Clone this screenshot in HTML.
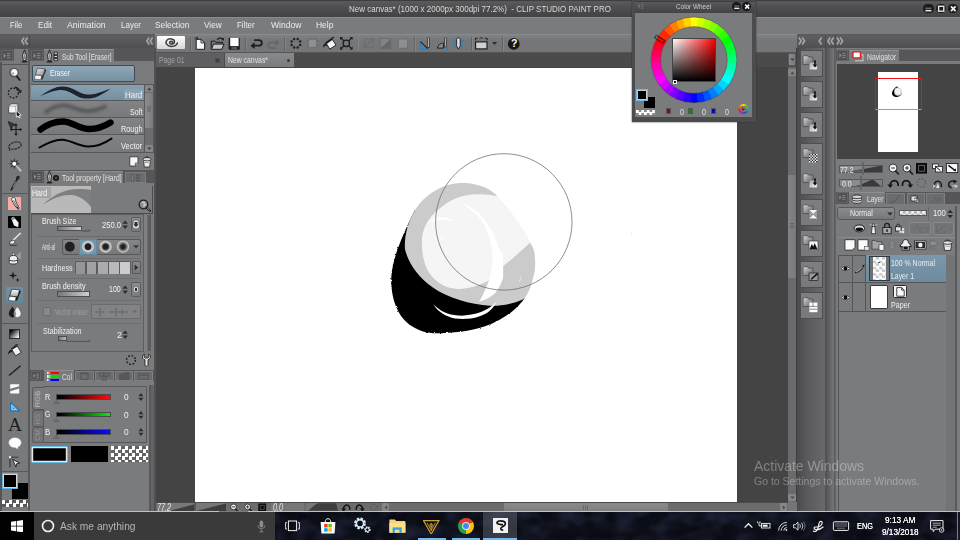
<!DOCTYPE html>
<html><head><meta charset="utf-8">
<style>
*{box-sizing:border-box;margin:0;padding:0}
html,body{width:960px;height:540px;overflow:hidden;background:#797a7c;font-family:"Liberation Sans",sans-serif;}
.a{position:absolute}
.t{position:absolute;white-space:nowrap;color:#e6e6e6;font-size:9px;line-height:11px}
</style></head><body>

<!-- p_top -->
<div class="a" style="left:0px;top:0px;width:960px;height:17px;background:linear-gradient(#3c3c3c 0,#3e3e3e 5%,#5a5a5c 9%,#4d4d4f 50%,#424244 100%);"></div>
<div class="t" style="left:349px;top:3.5px;font-size:8.8px;line-height:11px;color:#d8d8d8;transform:scaleX(0.9095);transform-origin:0 0;white-space:pre;">New canvas* (1000 x 2000px 300dpi 77.2%)  - CLIP STUDIO PAINT PRO</div>
<div class="a" style="left:922.8px;top:4px;width:10.8px;height:9.4px;background:#1a1a1a;border-radius:4.5px;"></div>
<div class="a" style="left:936px;top:4px;width:10px;height:9.4px;background:#1a1a1a;border-radius:4.5px;"></div>
<div class="a" style="left:948px;top:4px;width:10.2px;height:9.4px;background:#1a1a1a;border-radius:4.5px;"></div>
<svg class="a" style="left:922.8px;top:4px;" width="36" height="9.4" viewBox="0 0 36 9.4"><path d="M2.4 6.7h6" stroke="#e4e4e4" stroke-width="1.6"/><path d="M2.4 4.2h6" stroke="#8e8e8e" stroke-width="1"/><rect x="15.600" y="2.300" width="5.200" height="4.900" fill="none" stroke="#e4e4e4" stroke-width="1.400"/><path d="M28 2.300l4.600 4.800M32.600 2.300l-4.600 4.800" stroke="#f0f0f0" stroke-width="1.700"/></svg>
<div class="a" style="left:0px;top:17px;width:960px;height:17.5px;background:#7a7b7d;"></div>
<div class="a" style="left:0px;top:17px;width:960px;height:1px;background:#8b8c8e;"></div>
<div class="t" style="left:10px;top:18.8px;font-size:9.5px;line-height:11px;color:#ececec;transform:scaleX(0.8036);transform-origin:0 0;">File</div>
<div class="t" style="left:37.7px;top:18.8px;font-size:9.5px;line-height:11px;color:#ececec;transform:scaleX(0.8552);transform-origin:0 0;">Edit</div>
<div class="t" style="left:66.7px;top:18.8px;font-size:9.5px;line-height:11px;color:#ececec;transform:scaleX(0.9138);transform-origin:0 0;">Animation</div>
<div class="t" style="left:120.7px;top:18.8px;font-size:9.5px;line-height:11px;color:#ececec;transform:scaleX(0.8417);transform-origin:0 0;">Layer</div>
<div class="t" style="left:155px;top:18.8px;font-size:9.5px;line-height:11px;color:#ececec;transform:scaleX(0.8777);transform-origin:0 0;">Selection</div>
<div class="t" style="left:204px;top:18.8px;font-size:9.5px;line-height:11px;color:#ececec;transform:scaleX(0.8668);transform-origin:0 0;">View</div>
<div class="t" style="left:237.3px;top:18.8px;font-size:9.5px;line-height:11px;color:#ececec;transform:scaleX(0.8385);transform-origin:0 0;">Filter</div>
<div class="t" style="left:270.7px;top:18.8px;font-size:9.5px;line-height:11px;color:#ececec;transform:scaleX(0.8968);transform-origin:0 0;">Window</div>
<div class="t" style="left:316.3px;top:18.8px;font-size:9.5px;line-height:11px;color:#ececec;transform:scaleX(0.8906);transform-origin:0 0;">Help</div>
<div class="a" style="left:155px;top:34.5px;width:642px;height:18.5px;background:linear-gradient(#808183,#767779 30%,#747577);"></div>
<div class="a" style="left:0px;top:33.8px;width:155px;height:14.4px;background:linear-gradient(#58585a,#5e5e60 12%,#505052);"></div>
<div class="a" style="left:29.3px;top:34.5px;width:1px;height:13.5px;background:#4a4a4c;"></div>
<div class="a" style="left:0px;top:48.2px;width:155px;height:12.6px;background:#565658;"></div>
<div class="a" style="left:155px;top:33.8px;width:642px;height:1px;background:#8a8b8d;"></div>
<svg class="a" style="left:21px;top:37px;" width="8" height="8" viewBox="0 0 8 8"><path d="M3.2 0.5L0.8 4L3.2 7.5M6.6 0.5L4.2 4L6.6 7.5" fill="none" stroke="#a4a4a6" stroke-width="1.7"/></svg>
<svg class="a" style="left:146px;top:37px;" width="8" height="8" viewBox="0 0 8 8"><path d="M3.2 0.5L0.8 4L3.2 7.5M6.6 0.5L4.2 4L6.6 7.5" fill="none" stroke="#a4a4a6" stroke-width="1.7"/></svg>
<!-- p_cmd -->
<div class="a" style="left:156.5px;top:36.2px;width:28px;height:13.2px;background:linear-gradient(#ffffff,#d6d6d6);border-radius:1px;"></div>
<svg class="a" style="left:163.5px;top:37.3px;" width="14" height="11" viewBox="0 0 14 11"><path d="M8.4 5.2c-0.4-1.4-2.8-1.2-2.8 0.4c0 2 4.6 2.2 4.8-1c0.2-3-5.6-3.8-7.6-1.2c-2 2.6 0.4 6 4.6 6c3 0 5.4-1.4 6-3.4" fill="none" stroke="#3a3a3c" stroke-width="1.5" stroke-linecap="round"/></svg>
<div class="a" style="left:190.3px;top:36.5px;width:0.8px;height:14px;background:#626365;"></div>
<div class="a" style="left:191.1px;top:36.5px;width:0.7px;height:14px;background:#848587;"></div>
<div class="a" style="left:245.4px;top:36.5px;width:0.8px;height:14px;background:#626365;"></div>
<div class="a" style="left:246.2px;top:36.5px;width:0.7px;height:14px;background:#848587;"></div>
<div class="a" style="left:284.2px;top:36.5px;width:0.8px;height:14px;background:#626365;"></div>
<div class="a" style="left:285px;top:36.5px;width:0.7px;height:14px;background:#848587;"></div>
<div class="a" style="left:357.6px;top:36.5px;width:0.8px;height:14px;background:#626365;"></div>
<div class="a" style="left:358.4px;top:36.5px;width:0.7px;height:14px;background:#848587;"></div>
<div class="a" style="left:414.3px;top:36.5px;width:0.8px;height:14px;background:#626365;"></div>
<div class="a" style="left:415.1px;top:36.5px;width:0.7px;height:14px;background:#848587;"></div>
<div class="a" style="left:470.8px;top:36.5px;width:0.8px;height:14px;background:#626365;"></div>
<div class="a" style="left:471.6px;top:36.5px;width:0.7px;height:14px;background:#848587;"></div>
<div class="a" style="left:502.4px;top:36.5px;width:0.8px;height:14px;background:#626365;"></div>
<div class="a" style="left:503.2px;top:36.5px;width:0.7px;height:14px;background:#848587;"></div>
<svg class="a" style="left:190px;top:34.5px;" width="340" height="18.5" viewBox="190 34.5 340 18.5"><path d="M196.2 38.8h4.8l3.6 3.6v6.4h-8.4z" fill="#fafafa" stroke="#1e1e20" stroke-width="1"/><path d="M201 38.8v3.6h3.6" fill="none" stroke="#1e1e20" stroke-width="0.9"/><path d="M194.6 38.2l2.6-1.4l0.4 2.6" fill="none" stroke="#1e1e20" stroke-width="1"/><path d="M211.2 48.6v-8h3.6l1 1.2h6.6v1.8" fill="none" stroke="#1e1e20" stroke-width="1"/><path d="M211.4 48.8l2.2-5.2h10.4l-2.2 5.2z" fill="#c9c9cb" stroke="#1e1e20" stroke-width="1"/><path d="M217 39.2c1.6-2 4.4-2 6-0.6" fill="none" stroke="#1e1e20" stroke-width="1.2"/><path d="M224.2 37l-0.4 3l-2.6-0.6z" fill="#1e1e20"/><rect x="228.6" y="37.4" width="11.2" height="11.8" fill="#1e1e20"/><rect x="230.2" y="37.4" width="8.4" height="8.2" fill="#fcfcfc"/><rect x="231.4" y="46.6" width="5.6" height="2" fill="#5a5a5c"/><path d="M253.6 45.2h5c4.4 0 4.4-5.6 0-5.6h-4.4" fill="none" stroke="#1e1e20" stroke-width="1.8"/><path d="M250.4 45.2l4.2-3.4v6.8z" fill="#1e1e20"/><path d="M276.4 42h-5c-4.4 0-4.4 5.6 0 5.6h4.4" fill="none" stroke="#66676a" stroke-width="1.6" stroke-dasharray="20 0"/><path d="M279.6 42l-4.2-3.4v6.8z" fill="#66676a"/><circle cx="300.15" cy="44.56" r="1.25" fill="#232325"/><circle cx="297.66" cy="47.05" r="1.25" fill="#232325"/><circle cx="294.14" cy="47.05" r="1.25" fill="#232325"/><circle cx="291.65" cy="44.56" r="1.25" fill="#232325"/><circle cx="291.65" cy="41.04" r="1.25" fill="#232325"/><circle cx="294.14" cy="38.55" r="1.25" fill="#232325"/><circle cx="297.66" cy="38.55" r="1.25" fill="#232325"/><circle cx="300.15" cy="41.04" r="1.25" fill="#232325"/><rect x="308.6" y="38.8" width="8" height="8" fill="#8e8f91" stroke="#6c6d6f" stroke-width="0.8"/><path d="M310 37v1.4M315.2 37v1.4M310 47.2v1.4M315.2 47.2v1.4M306.8 40.2h1.4M306.8 45.4h1.4M317 40.2h1.4M317 45.4h1.4" stroke="#6c6d6f" stroke-width="1.6"/><path d="M326 42.4l6-4l4 6.2l-6.2 4z" fill="#f4f4f4" stroke="#1e1e20" stroke-width="0.9"/><path d="M325.6 42.8l6.2-4.2" stroke="#1e1e20" stroke-width="2"/><path d="M331 38.4l2.8-2" stroke="#1e1e20" stroke-width="1.2"/><path d="M326 42.6c-2 0.8-3.400 2.400-3 4.600c1-1.400 2.400-2 4.200-1.800z" fill="#1e1e20"/><circle cx="346.3" cy="42.8" r="3.2" fill="none" stroke="#1e1e20" stroke-width="1.4"/><path d="M344 40.500l-3.400-3.400M348.600 40.500l3.400-3.400M344 45.100l-3.400 3.400M348.600 45.100l3.400 3.400" stroke="#1e1e20" stroke-width="1.3"/><path d="M340 36.500h3l-3 3zM352.600 36.500h-3l3 3zM340 49.100h3l-3-3zM352.600 49.100h-3l3-3z" fill="#1e1e20"/><rect x="364.4" y="38.6" width="8.6" height="8.6" fill="none" stroke="#66676a" stroke-width="0.9" stroke-dasharray="1.6 1"/><path d="M363.600 48l10-10" stroke="#66676a" stroke-width="1"/><rect x="380.2" y="38.2" width="10.6" height="9.800" fill="#838486" stroke="#66676a" stroke-width="0.7"/><path d="M380.2 48l10.600-9.800v9.800z" fill="#66676a"/><rect x="398.4" y="38.6" width="9" height="9" fill="#8d8e90" stroke="#66676a" stroke-width="1" stroke-dasharray="1.400 1"/><path d="M420.2 40.800v7.600h8" fill="none" stroke="#1e84d0" stroke-width="1.300"/><path d="M420.400 41.200l7.400 7" stroke="#1e1e20" stroke-width="1.100"/><path d="M428.600 37.200v10" stroke="#1e1e20" stroke-width="2.200"/><path d="M428.600 37.600v9" stroke="#e8e8e8" stroke-width="0.800"/><path d="M437.400 47.600c0.600-3 2.600-4.800 6-5v5z" fill="#8a8b8d" stroke="#1e1e20" stroke-width="1"/><path d="M445.400 37.200v9.600" stroke="#1e1e20" stroke-width="2.200"/><path d="M445.400 37.600v8.600" stroke="#e8e8e8" stroke-width="0.800"/><circle cx="446.800" cy="48.200" r="1" fill="#1e84d0"/><circle cx="442" cy="42.200" r="0.900" fill="#1e84d0"/><path d="M455.200 38v10M461.600 38v10" stroke="#1e84d0" stroke-width="0.900" stroke-dasharray="1.800 1.200"/><path d="M453.600 39.400l3 1.200M453.600 46.400l3-1.200M464.400 39.400l-3 1.200M464.400 46.400l-3-1.200" stroke="#1e84d0" stroke-width="1.100"/><path d="M458.400 37.400c1.400 0 1.800 0.800 1.800 2v6l-1.800 3.200l-1.800-3.200v-6c0-1.200 0.400-2 1.800-2z" fill="#dcdcdc" stroke="#1e1e20" stroke-width="0.900"/><rect x="475.600" y="41.400" width="11.400" height="7" fill="#d0d0d2" stroke="#1e1e20" stroke-width="1.200"/><path d="M475.400 39.800v-2h2.200M487.200 39.800v-2h-2.200" fill="none" stroke="#1e1e20" stroke-width="1"/><path d="M479.600 38.200l1.700-1.200l1.700 1.200" fill="none" stroke="#1e1e20" stroke-width="0.900"/><path d="M492 41.400h5.200l-2.600 3.200z" fill="#2e2e30"/><circle cx="513.800" cy="43.400" r="5.900" fill="#161618"/></svg>
<div class="t" style="left:510.9px;top:37.2px;font-size:10.5px;line-height:13px;color:#fafafa;font-weight:bold;">?</div>
<!-- p_canvas -->
<div class="a" style="left:155px;top:52px;width:642px;height:16px;background:#4b4b4c;"></div>
<div class="a" style="left:155px;top:51.5px;width:642px;height:1.2px;background:#555557;"></div>
<div class="a" style="left:155px;top:67px;width:642px;height:444px;background:#444444;"></div>
<div class="a" style="left:156px;top:53px;width:67.5px;height:13.5px;background:#5f5f61;"></div>
<div class="t" style="left:158.5px;top:54.5px;font-size:8.8px;line-height:11px;color:#a3a3a5;transform:scaleX(0.7778);transform-origin:0 0;">Page 01</div>
<svg class="a" style="left:215px;top:57.5px;" width="5" height="5" viewBox="0 0 5 5"><path d="M0.6 0.6l3.8 3.8M4.4 0.6l-3.8 3.8" stroke="#3c3c3e" stroke-width="1.5"/></svg>
<div class="a" style="left:225.3px;top:53px;width:69px;height:14px;background:linear-gradient(#88898b,#7b7c7e);"></div>
<div class="t" style="left:228px;top:54.5px;font-size:8.8px;line-height:11px;color:#e4e4e4;transform:scaleX(0.7789);transform-origin:0 0;">New canvas*</div>
<div class="a" style="left:286.5px;top:58.6px;width:3px;height:3px;background:#3a3a3c;border-radius:50%;"></div>
<div class="a" style="left:195px;top:68px;width:542px;height:434.2px;background:#ffffff;"></div>
<svg class="a" style="left:195px;top:67.7px;" width="542" height="434.5" viewBox="195 67.7 542 434.5"><defs><filter id="rough" x="-5%" y="-5%" width="110%" height="110%"><feTurbulence type="fractalNoise" baseFrequency="0.35" numOctaves="2" seed="4" result="n"/><feDisplacementMap in="SourceGraphic" in2="n" scale="2.2" xChannelSelector="R" yChannelSelector="G"/></filter></defs><path d="M414.7 210 C404 232 392 258 391.3 277 C390.5 298 398 318 412 326 C420 331 428 333 436 333 C452 333 470 331 485 326 C500 321 514 312 524 299 L534 268 L470 240 Z" fill="#000" filter="url(#rough)"/><path d="M414.7 210.3 C426 192 446 182 464 182.7 C477 183 488 187 496 194.5 L529.5 241.5 C533 246 535 252 535 258 C535.5 266 535 272 533 278 C531 287 528 294 523.5 299 C512 304 500 306 490 305.5 C470 304 448 298 432.5 287 C418 277 408 262 405 249 C404 236 408 222 414.7 210.3 Z" fill="#cbcbcb"/><path d="M422 245 C421 232 426 221 434.4 213 C444 203 457 195.5 470 194.4 C481 193.5 490 194 497 196 C509 208 522 226 530.5 242 C520 252 509 261 500 268.5 C497 273 494 276 490.5 279 C484 283.5 477 286 470 287.3 C463 289 457 289 451 287.8 C442 286 434 280 428.8 272 C424 264 422 254 422 245 Z" fill="#f5f5f5"/><path d="M458.5 201.5 C465 204 471 207 475 210 C480 213.5 483 217 486 221.5 C489 226 492 231 494 235 C496 240 498 245 499 248 L503 254 L503 262 C503 268 503.500 273 503 278 C501 284 498.500 289 495 293 C490 297.500 484 300 479 301.500 C481 298 483 295 484 292 C486 288 488 283 489.7 277.5 C491 272 492 267 492.5 262 L492.5 253 C492 249 491.5 246 491 243 C489 236 487 230 484 224 C481 219 477 214 472 210.5 C468 207 463 204 458.5 201.5 Z" fill="#fff"/><path d="M430 222.500 C432 219.500 436 217 441 216.800 C446 216.800 451 218.500 455.500 221.500 C450 219.800 445 219.300 440 219.800 C436 220.300 433 221.300 430 222.500 Z" fill="#fff"/><path d="M440 238.500l5.600-2.200l-3.600 3.400z" fill="#fff"/><path d="M433.500 304 C440 311 448 314.500 458 315.300 C466 315.800 474 314.300 481 311.800 C487 309.300 492 306 496.500 301.500 C493 309.500 486.500 314 479 316.200 C471 318.800 463 319.200 455 318.200 C446 316.600 437.500 311.500 433.500 304 Z" fill="#fff"/><path d="M519 281l2 -5l0.6 1.2l-2 5.2z" fill="#e4e4e4"/><circle cx="503.8" cy="221.6" r="68.2" fill="none" stroke="#6a6a6a" stroke-width="0.75"/></svg>
<div class="a" style="left:631px;top:231px;width:1px;height:4px;background:#efefef;"></div>
<div class="a" style="left:787.5px;top:67px;width:9px;height:435px;background:#6a6a6c;"></div>
<div class="a" style="left:788.3px;top:52.8px;width:7.6px;height:13.2px;background:linear-gradient(90deg,#8a8a8c,#7a7a7c);border-radius:1.5px;border:0.5px solid #5a5a5c;"></div>
<svg class="a" style="left:790px;top:58px;" width="5" height="4" viewBox="0 0 5 4"><path d="M0.3 0.5h4.2l-2.1 2.6z" fill="#3e3e40"/></svg>
<div class="a" style="left:788.3px;top:69px;width:7.6px;height:6.8px;background:#858587;border-radius:1px;"></div>
<svg class="a" style="left:790px;top:70.5px;" width="5" height="4" viewBox="0 0 5 4"><path d="M0.3 3.2h4.2l-2.1 -2.6z" fill="#4a4a4c"/></svg>
<div class="a" style="left:788.3px;top:494px;width:7.6px;height:6.8px;background:#858587;border-radius:1px;"></div>
<svg class="a" style="left:790px;top:496px;" width="5" height="4" viewBox="0 0 5 4"><path d="M0.3 0.5h4.2l-2.1 2.6z" fill="#4a4a4c"/></svg>
<div class="a" style="left:788.2px;top:174.6px;width:7.7px;height:103.4px;background:linear-gradient(90deg,#828385,#78797b);border-radius:1px;"></div>
<svg class="a" style="left:790px;top:223px;" width="4" height="6" viewBox="0 0 4 6"><path d="M0 0.500h4M0 2.500h4M0 4.500h4" stroke="#58585a" stroke-width="0.700"/></svg>
<div class="a" style="left:155px;top:502.2px;width:642px;height:9px;background:#6c6c6e;"></div>
<div class="a" style="left:155px;top:502.2px;width:642px;height:0.8px;background:#4a4a4c;"></div>
<!-- p_left -->
<div class="a" style="left:0px;top:62px;width:29px;height:449px;background:#78797b;"></div>
<div class="a" style="left:0px;top:62px;width:1.5px;height:449px;background:#555557;"></div>
<div class="a" style="left:28.3px;top:48px;width:1.7px;height:463px;background:#5a5a5c;"></div>
<div class="a" style="left:30px;top:62px;width:125px;height:449px;background:#7a7b7d;"></div>
<div class="a" style="left:153.5px;top:48px;width:2.3px;height:463px;background:#505052;"></div>
<div class="a" style="left:1.3px;top:49.5px;width:12px;height:11.5px;background:#515153;border:0.5px solid #636365;"></div><svg class="a" style="left:1.3px;top:49.5px;" width="12" height="11.5" viewBox="0 0 12 11.5"><path d="M2.6 3.2l2.4 2.5l-2.4 2.5z" fill="#8f8f91"/><path d="M5.8 3.6h3.6M5.8 5.7h3.6M5.8 7.8h3.6" stroke="#8f8f91" stroke-width="0.9"/></svg>
<div class="a" style="left:14px;top:49px;width:14.3px;height:13px;background:#7a7b7d;"></div>
<svg class="a" style="left:20.5px;top:48.8px;" width="7" height="14" viewBox="0 0 7 14"><path d="M3.5 0.8L1.6 6l0.7 5.6h2.4l0.7-5.6z" fill="#d8d8d8" stroke="#1c1c1c" stroke-width="0.9"/><path d="M3.5 2v8" stroke="#555" stroke-width="0.6"/><path d="M0.8 12.8h5.4" stroke="#111" stroke-width="1.2"/></svg>
<div class="a" style="left:31px;top:49.5px;width:12px;height:11.5px;background:#515153;border:0.5px solid #636365;"></div><svg class="a" style="left:31px;top:49.5px;" width="12" height="11.5" viewBox="0 0 12 11.5"><path d="M2.6 3.2l2.4 2.5l-2.4 2.5z" fill="#8f8f91"/><path d="M5.8 3.6h3.6M5.8 5.7h3.6M5.8 7.8h3.6" stroke="#8f8f91" stroke-width="0.9"/></svg>
<div class="a" style="left:44px;top:49px;width:70.3px;height:13.2px;background:#7a7b7d;border-top:0.6px solid #8e8f91;"></div>
<svg class="a" style="left:46px;top:48.8px;" width="7" height="14" viewBox="0 0 7 14"><path d="M3.5 0.8L1.6 6l0.7 5.6h2.4l0.7-5.6z" fill="#d8d8d8" stroke="#1c1c1c" stroke-width="0.9"/><path d="M3.5 2v8" stroke="#555" stroke-width="0.6"/><path d="M0.8 12.8h5.4" stroke="#111" stroke-width="1.2"/></svg>
<svg class="a" style="left:53px;top:51px;" width="6" height="11" viewBox="0 0 6 11"><path d="M1 1.5v8M1 1.2h3.5v2H1M1 4.4h3.5v2H1M1 7.6h3.5v2H1" fill="none" stroke="#1e1e20" stroke-width="0.8"/><rect x="1.6" y="1.8" width="2.4" height="1" fill="#ddd"/><rect x="1.6" y="5" width="2.4" height="1" fill="#ddd"/><rect x="1.6" y="8.2" width="2.4" height="1" fill="#ddd"/></svg>
<div class="t" style="left:61.5px;top:51.8px;font-size:8.6px;line-height:10px;color:#e2e2e2;transform:scaleX(0.7522);transform-origin:0 0;">Sub Tool [Eraser]</div>
<div class="a" style="left:31.5px;top:64.8px;width:103.8px;height:16.8px;background:linear-gradient(#8da7b8,#7791a3);border:1px solid #3e4a54;border-radius:2px;"></div>
<svg class="a" style="left:34px;top:67px;" width="13" height="13.5" viewBox="0 0 13 13.5"><defs><linearGradient id="er1" x1="0" y1="0" x2="1" y2="1"><stop offset="0" stop-color="#f0f0f0"/><stop offset="1" stop-color="#8c8c8e"/></linearGradient></defs><path d="M11 1.800L12.200 3.200L8.600 12.200L6.600 12.800L7.600 8.800L9 8.500Z" fill="#343436"/><path d="M3.500 1.200L11 1.800L9 8.600L1.500 7.800Z" fill="url(#er1)" stroke="#2e2e30" stroke-width="0.600"/><path d="M1.400 8L7.700 8.800L6.700 12.800L0.400 12Z" fill="#fbfbfb" stroke="#3a3a3c" stroke-width="0.500"/></svg>
<div class="t" style="left:49.5px;top:67.3px;font-size:9.8px;line-height:12px;color:#f2f2f2;transform:scaleX(0.6929);transform-origin:0 0;">Eraser</div>
<div class="a" style="left:30.5px;top:84px;width:123px;height:69px;background:#58585a;"></div>
<div class="a" style="left:31.3px;top:84.7px;width:112.8px;height:15.4px;background:linear-gradient(#87a1b2,#7590a2);"></div>
<div class="a" style="left:31.3px;top:100.8px;width:112.8px;height:16.3px;background:linear-gradient(#828385,#78797b);"></div>
<div class="a" style="left:31.3px;top:118px;width:112.8px;height:16.2px;background:linear-gradient(#828385,#78797b);"></div>
<div class="a" style="left:31.3px;top:135px;width:112.8px;height:16.5px;background:linear-gradient(#828385,#78797b);"></div>
<svg class="a" style="left:31px;top:84px;" width="113" height="69" viewBox="31 84 113 69"><defs><filter id="bl" x="-10%" y="-80%" width="120%" height="260%"><feGaussianBlur stdDeviation="1.7"/></filter></defs><path d="M40 96.3 C44 93.5 48 91 52 89 C56 87.2 59.5 86.4 63 86.5 C66.5 86.6 69 87.2 72 88.6 C75 90 77.5 91.5 80 92.6 C83 94 85.5 94.6 88 94.6 C92 94.6 95 94 98 93 C102 91.6 106 90.2 110.7 88.7 C107 91.2 103.5 93.4 100 95.2 C96.5 97 93.5 98 90 98.4 C87 98.7 84.5 98.6 82 98 C79 97.2 76.5 95.8 74 94.4 C71 92.8 68.500 91.500 66 90.800 C63.500 90.100 61 89.800 58 90.200 C54.500 90.700 51.500 91.600 48 93 C45.500 94 43 95.200 40 96.300 Z" fill="#1d2430"/><path d="M46 112 C52 107.500 58 105 64 105.300 C72 105.700 77 110.500 86 111 C93 111.400 99 109.500 105 106.500" fill="none" stroke="#3a3a3c" stroke-width="3.800" stroke-linecap="round" filter="url(#bl)" opacity="0.600"/><path d="M40.500 129.500 C47 124.500 55 121.500 63 121.500 C72 121.500 78.500 128.600 88 129 C97 129.400 104 126.500 110.500 122.500" fill="none" stroke="#000" stroke-width="6.400" stroke-linecap="round"/><path d="M39.500 147.500 C48 142.500 55 139.500 62 139.700 C71 140 78 146 88 146.500 C97 146.800 105 143 111.500 138.600" fill="none" stroke="#050505" stroke-width="2" stroke-linecap="round"/></svg>
<div class="a" style="left:124.4px;top:89.3px;width:18.4px;height:11px;background:rgba(150,165,178,0.55);"></div>
<div class="t" style="left:125px;top:88.9px;font-size:9.6px;line-height:12px;color:#f4f4f4;transform:scaleX(0.8267);transform-origin:0 0;">Hard</div>
<div class="t" style="left:129.6px;top:105.9px;font-size:9.6px;line-height:12px;color:#f4f4f4;transform:scaleX(0.7379);transform-origin:0 0;">Soft</div>
<div class="t" style="left:120.6px;top:123px;font-size:9.6px;line-height:12px;color:#f4f4f4;transform:scaleX(0.7636);transform-origin:0 0;">Rough</div>
<div class="t" style="left:121.1px;top:140.3px;font-size:9.6px;line-height:12px;color:#f4f4f4;transform:scaleX(0.7753);transform-origin:0 0;">Vector</div>
<div class="a" style="left:144.8px;top:84.7px;width:8.2px;height:67.5px;background:#6d6d6f;"></div>
<div class="a" style="left:145.2px;top:85.2px;width:7.4px;height:6.8px;background:#868688;border-radius:1px;"></div>
<svg class="a" style="left:146.5px;top:86.5px;" width="5" height="4" viewBox="0 0 5 4"><path d="M0.3 3.2h4.2l-2.1 -2.6z" fill="#3e3e40"/></svg>
<div class="a" style="left:145.2px;top:145px;width:7.4px;height:6.8px;background:#868688;border-radius:1px;"></div>
<svg class="a" style="left:146.5px;top:147px;" width="5" height="4" viewBox="0 0 5 4"><path d="M0.3 0.5h4.2l-2.1 2.6z" fill="#3e3e40"/></svg>
<div class="a" style="left:145.2px;top:93px;width:7.4px;height:35px;background:linear-gradient(90deg,#8c8c8e,#7c7c7e);border-radius:1px;"></div>
<svg class="a" style="left:147px;top:106px;" width="4" height="6" viewBox="0 0 4 6"><path d="M0 1h4M0 3h4M0 5h4" stroke="#5a5a5c" stroke-width="0.7"/></svg>
<svg class="a" style="left:128.5px;top:156px;" width="10" height="11" viewBox="0 0 10 11"><path d="M0.8 0.8h8.2v6.2l-2.6 3h-5.6z" fill="#f6f6f6" stroke="#2c2c2e" stroke-width="0.8"/><path d="M9 7h-2.6v3" fill="#bbb" stroke="#2c2c2e" stroke-width="0.6"/></svg>
<svg class="a" style="left:141.5px;top:155.5px;" width="10" height="12" viewBox="0 0 10 12"><path d="M1.5 3.5h7l-0.8 7.5h-5.4z" fill="#ececec" stroke="#2c2c2e" stroke-width="0.8"/><ellipse cx="5" cy="3.2" rx="4" ry="1.7" fill="#dcdcdc" stroke="#2c2c2e" stroke-width="0.8"/><path d="M3.2 1.6c0.5-1.2 3.1-1.2 3.6 0" fill="none" stroke="#2c2c2e" stroke-width="0.8"/><path d="M2.6 6.5h4.8" stroke="#888" stroke-width="0.7"/></svg>
<div class="a" style="left:30px;top:170.2px;width:123.5px;height:12.6px;background:#565658;"></div>
<div class="a" style="left:30.6px;top:171px;width:12.5px;height:11.3px;background:#515153;border:0.5px solid #636365;"></div><svg class="a" style="left:30.6px;top:171px;" width="12.5" height="11.3" viewBox="0 0 12 11.5"><path d="M2.6 3.2l2.4 2.5l-2.4 2.5z" fill="#8f8f91"/><path d="M5.8 3.6h3.6M5.8 5.7h3.6M5.8 7.8h3.6" stroke="#8f8f91" stroke-width="0.9"/></svg>
<div class="a" style="left:44px;top:171px;width:78.5px;height:12px;background:#7a7b7d;border-top:0.6px solid #8e8f91;"></div>
<svg class="a" style="left:46px;top:170.4px;" width="7" height="14" viewBox="0 0 7 14"><path d="M3.5 0.8L1.6 6l0.7 5.6h2.4l0.7-5.6z" fill="#d8d8d8" stroke="#1c1c1c" stroke-width="0.9"/><path d="M3.5 2v8" stroke="#555" stroke-width="0.6"/><path d="M0.8 12.8h5.4" stroke="#111" stroke-width="1.2"/></svg>
<div class="a" style="left:53.2px;top:175.2px;width:5.6px;height:5.6px;background:#1b1b1d;border-radius:50%;"></div>
<div class="a" style="left:54.8px;top:176.8px;width:2.4px;height:2.4px;background:#6a6a6c;border-radius:50%;"></div>
<div class="t" style="left:62.4px;top:173.4px;font-size:8.6px;line-height:10px;color:#e2e2e2;transform:scaleX(0.7892);transform-origin:0 0;">Tool property [Hard]</div>
<div class="a" style="left:124.5px;top:172px;width:21.5px;height:10.6px;background:#6a6b6d;border:0.5px solid #7c7d7f;"></div>
<svg class="a" style="left:130px;top:172.6px;" width="13" height="10" viewBox="0 0 13 10"><path d="M2.5 0.5l-1.2 4l0.5 4.5h1.4l0.5-4.5z" fill="#7d7e80" stroke="#58585a" stroke-width="0.7"/><path d="M6.5 1v8" stroke="#58585a" stroke-width="0.7"/><rect x="7" y="1.5" width="3" height="1.6" fill="#58585a"/><rect x="7" y="4.2" width="3" height="1.6" fill="#58585a"/><rect x="7" y="6.9" width="3" height="1.6" fill="#58585a"/></svg>
<div class="a" style="left:30.5px;top:185.5px;width:122.5px;height:28.2px;background:#4c4c4e;"></div>
<div class="a" style="left:31px;top:186.3px;width:121.3px;height:26.6px;background:#7a7b7d;"></div>
<div class="a" style="left:31px;top:186.3px;width:60.3px;height:26.6px;background:#b9b9b9;"></div>
<svg class="a" style="left:31px;top:186.3px;" width="60.3" height="26.6" viewBox="0 0 60.3 26.6"><path d="M12 18.5 C20 11 32 3.5 45 3 C51 2.8 56 3.2 60.3 4 V21.5 C55 14 48 9.5 40 9 C30 8.4 21 13 12 18.5 Z" fill="#7e7f81"/></svg>
<div class="a" style="left:31.5px;top:186.8px;width:19px;height:10.8px;background:#a5a5a7;"></div>
<div class="t" style="left:32.2px;top:186.5px;font-size:9.4px;line-height:11px;color:#f8f8f8;transform:scaleX(0.7461);transform-origin:0 0;">Hard</div>
<svg class="a" style="left:138px;top:199px;" width="13" height="13" viewBox="0 0 13 13"><circle cx="5.5" cy="5.5" r="4.3" fill="#8c8d8f" stroke="#1e1e20" stroke-width="1.3"/><path d="M8.6 8.6l3.4 3.2" stroke="#1e1e20" stroke-width="2.2" stroke-linecap="round"/><path d="M3.4 4.2c0.8-1.4 2.6-1.5 3.4-0.6l-1.2 1 0.4 0.9 1.6-0.4c0.1 1.3-1.2 2.4-2.6 1.8" fill="none" stroke="#e6e6e6" stroke-width="0.9"/><path d="M9 8.7l2.6 2.5" stroke="#d8d8d8" stroke-width="0.7"/></svg>
<div class="a" style="left:30.5px;top:214.3px;width:113.5px;height:138px;background:#7a7b7d;border:0.6px solid #5e5e60;"></div>
<div class="a" style="left:144px;top:214.3px;width:9px;height:138px;background:#78797b;"></div>
<div class="a" style="left:144.3px;top:215px;width:6.7px;height:135.5px;background:linear-gradient(90deg,#7e7f81 40%,#5c5c5e 60%);"></div>
<div class="a" style="left:38px;top:235.7px;width:102px;height:0.8px;background:#6c6d6f;"></div>
<div class="a" style="left:38px;top:258px;width:102px;height:0.8px;background:#6c6d6f;"></div>
<div class="a" style="left:38px;top:278.4px;width:102px;height:0.8px;background:#6c6d6f;"></div>
<div class="a" style="left:38px;top:299.6px;width:102px;height:0.8px;background:#6c6d6f;"></div>
<div class="a" style="left:38px;top:323px;width:102px;height:0.8px;background:#6c6d6f;"></div>
<div class="t" style="left:42.4px;top:215.2px;font-size:9.4px;line-height:11px;color:#f0f0f0;transform:scaleX(0.7612);transform-origin:0 0;">Brush Size</div>
<div class="a" style="left:57.3px;top:226.3px;width:25.2px;height:5.2px;background:linear-gradient(90deg,#77787a,#d0d0d0);border:0.6px solid #4e4e50;"></div>
<svg class="a" style="left:82px;top:226px;" width="9" height="6" viewBox="0 0 9 6"><path d="M0.4 5h7.2v-1.6" fill="none" stroke="#3e3e40" stroke-width="0.8"/></svg>
<div class="t" style="left:102px;top:218.8px;font-size:9.8px;line-height:12px;color:#f0f0f0;transform:scaleX(0.7748);transform-origin:0 0;">250.0</div>
<svg class="a" style="left:122.2px;top:220.3px;" width="6.3" height="9.3" viewBox="0 0 6 9"><path d="M0.3 3.6L3 0.4L5.7 3.6z M0.3 5.4L3 8.6L5.7 5.4z" fill="#2e2e30"/></svg>
<div class="a" style="left:130.8px;top:216.5px;width:10.3px;height:15.6px;background:linear-gradient(#8a8b8d,#7a7b7d);border:0.7px solid #5c5c5e;border-radius:1.5px;"></div>
<svg class="a" style="left:132px;top:219px;" width="8" height="11" viewBox="0 0 8 11"><path d="M4 0.8c2 0 3 1.5 3 3.4c0 1 0.5 1.6 0.5 2.8c0 1.8-1.5 3-3.5 3s-3.5-1.2-3.5-3c0-1.2 0.5-1.8 0.5-2.8c0-1.9 1-3.4 3-3.4z" fill="#dadada" stroke="#3a3a3c" stroke-width="0.6"/><path d="M2.6 3h2.8v2.4h1.2l-2.6 2.6l-2.6-2.6h1.2z" fill="#2a2a2c"/></svg>
<div class="t" style="left:42.4px;top:242px;font-size:8.6px;line-height:10px;color:#e8e8e8;transform:scaleX(0.5333);transform-origin:0 0;">Anti-al</div>
<div class="a" style="left:61.6px;top:239px;width:79.4px;height:15.6px;background:linear-gradient(#858688,#77787a);border:0.7px solid #58585a;border-radius:2px;"></div>
<div class="a" style="left:78.5px;top:238.8px;width:18.5px;height:15.8px;background:#7396ae;border:0.6px solid #6288a2;"></div>
<svg class="a" style="left:61px;top:239px;" width="80" height="16" viewBox="61 239 80 16"><defs><radialGradient id="aa1"><stop offset="0" stop-color="#1c1c1e"/><stop offset="0.5" stop-color="#222"/><stop offset="0.62" stop-color="#c9c9c9"/><stop offset="1" stop-color="#bdbdbd"/></radialGradient><radialGradient id="aa2"><stop offset="0" stop-color="#1c1c1e"/><stop offset="0.4" stop-color="#222"/><stop offset="0.75" stop-color="#c9c9c9"/><stop offset="1" stop-color="#bdbdbd"/></radialGradient><radialGradient id="aa3"><stop offset="0" stop-color="#1c1c1e"/><stop offset="0.3" stop-color="#222"/><stop offset="0.9" stop-color="#c9c9c9"/><stop offset="1" stop-color="#bdbdbd"/></radialGradient></defs><circle cx="69.8" cy="246.700" r="5" fill="#202022"/><circle cx="88" cy="246.700" r="6.200" fill="url(#aa1)"/><circle cx="105.6" cy="246.700" r="6.200" fill="url(#aa2)"/><circle cx="123" cy="246.700" r="6.200" fill="url(#aa3)"/><path d="M133 245.200h6l-3 3.400z" fill="#3a3a3c"/></svg>
<div class="t" style="left:42.4px;top:262.2px;font-size:9.4px;line-height:11px;color:#f0f0f0;transform:scaleX(0.7607);transform-origin:0 0;">Hardness</div>
<div class="a" style="left:74.8px;top:261px;width:55.8px;height:13.4px;background:#5c5c5e;border-radius:1px;"></div>
<div class="a" style="left:75.6px;top:261.7px;width:9.8px;height:12px;background:#959597;"></div>
<div class="a" style="left:86.7px;top:261.7px;width:9.8px;height:12px;background:#a1a1a3;"></div>
<div class="a" style="left:97.8px;top:261.7px;width:9.8px;height:12px;background:#acacae;"></div>
<div class="a" style="left:108.9px;top:261.7px;width:9.8px;height:12px;background:#b9b9bb;"></div>
<div class="a" style="left:120px;top:261.7px;width:9.8px;height:12px;background:#cbcbcd;"></div>
<div class="a" style="left:131.5px;top:261.3px;width:9.6px;height:13px;background:linear-gradient(#88898b,#78797b);border:0.6px solid #5a5a5c;border-radius:1px;"></div>
<svg class="a" style="left:134.3px;top:264.3px;" width="5" height="7" viewBox="0 0 5 7"><path d="M0.6 0.4l3.6 3l-3.6 3z" fill="#2e2e30"/></svg>
<div class="t" style="left:42.4px;top:280px;font-size:9.4px;line-height:11px;color:#f0f0f0;transform:scaleX(0.7656);transform-origin:0 0;">Brush density</div>
<div class="a" style="left:57.3px;top:290.7px;width:32.3px;height:6px;background:linear-gradient(90deg,#77787a,#cfcfcf);border:0.6px solid #4e4e50;"></div>
<div class="t" style="left:109px;top:283.3px;font-size:9.8px;line-height:12px;color:#f0f0f0;transform:scaleX(0.7156);transform-origin:0 0;">100</div>
<svg class="a" style="left:122.2px;top:284.6px;" width="6.3" height="9.3" viewBox="0 0 6 9"><path d="M0.3 3.6L3 0.4L5.7 3.6z M0.3 5.4L3 8.6L5.7 5.4z" fill="#2e2e30"/></svg>
<div class="a" style="left:130.8px;top:281.5px;width:10.3px;height:15.6px;background:linear-gradient(#8a8b8d,#7a7b7d);border:0.7px solid #5c5c5e;border-radius:1.5px;"></div>
<div class="a" style="left:133.6px;top:286.5px;width:4.6px;height:5px;background:#2c2c2e;border:1.1px solid #e8e8e8;border-radius:1.2px;"></div>
<div class="a" style="left:42.7px;top:306.7px;width:8.6px;height:9.3px;background:#88898b;border:0.6px solid #6a6a6c;border-radius:1.5px;"></div>
<div class="t" style="left:55px;top:306.6px;font-size:8.6px;line-height:10px;color:#9d9ea0;transform:scaleX(0.6511);transform-origin:0 0;">Vector eraser</div>
<div class="a" style="left:91.3px;top:304px;width:49.7px;height:15.3px;background:#828385;border:0.6px solid #6c6c6e;border-radius:2px;"></div>
<svg class="a" style="left:92px;top:304px;" width="49" height="15" viewBox="0 0 49 15"><path d="M8 3.5v9M3.5 8h9" stroke="#6e6f71" stroke-width="1.6"/><path d="M17 8h19M24 3.5v9M30 5v6" stroke="#6e6f71" stroke-width="1.4"/><path d="M40 6.5h5l-2.5 3z" fill="#6a6a6c"/></svg>
<div class="t" style="left:42.5px;top:325px;font-size:9.4px;line-height:11px;color:#f0f0f0;transform:scaleX(0.7636);transform-origin:0 0;">Stabilization</div>
<div class="a" style="left:57.5px;top:335.8px;width:9.2px;height:5.5px;background:linear-gradient(90deg,#77787a,#bdbdbd);border:0.6px solid #4e4e50;"></div>
<svg class="a" style="left:66px;top:335.5px;" width="25" height="7" viewBox="0 0 25 7"><path d="M0.5 5.4h23.2v-1.8" fill="none" stroke="#4a4a4c" stroke-width="0.8"/></svg>
<div class="t" style="left:116.7px;top:328.7px;font-size:9.8px;line-height:12px;color:#f0f0f0;transform:scaleX(0.9175);transform-origin:0 0;">2</div>
<svg class="a" style="left:122.2px;top:330px;" width="6.3" height="9.3" viewBox="0 0 6 9"><path d="M0.3 3.6L3 0.4L5.7 3.6z M0.3 5.4L3 8.6L5.7 5.4z" fill="#2e2e30"/></svg>
<svg class="a" style="left:125px;top:354px;" width="12" height="12" viewBox="0 0 12 12"><circle cx="6" cy="6" r="4.4" fill="none" stroke="#1e1e20" stroke-width="1.5" stroke-dasharray="1.7 1.75"/></svg>
<svg class="a" style="left:141px;top:353px;" width="12" height="14" viewBox="0 0 12 14"><path d="M3.2 1c-1.6 0.8-2.2 2.8-1.2 4.4c0.5 0.8 1.3 1.2 2 1.4v5.6c0 1 3 1 3 0v-5.6c0.7-0.2 1.5-0.6 2-1.4c1-1.6 0.4-3.6-1.2-4.4v3.2l-1.2 0.9h-2.2l-1.2-0.9z" fill="#ececec" stroke="#1e1e20" stroke-width="0.9"/></svg>
<!-- p_tools -->
<div class="a" style="left:1.5px;top:64.3px;width:27px;height:0.9px;background:#555557;"></div>
<svg class="a" style="left:0px;top:62px;" width="29" height="132" viewBox="0 62 29 132"><defs><radialGradient id="mg" cx="0.6" cy="0.4"><stop offset="0" stop-color="#fff"/><stop offset="0.7" stop-color="#f2f2f2"/><stop offset="1" stop-color="#9a9a9c"/></radialGradient><linearGradient id="gr1" x1="0" y1="0" x2="1" y2="1"><stop offset="0" stop-color="#fff"/><stop offset="1" stop-color="#000"/></linearGradient><linearGradient id="wg" x1="0" y1="0" x2="0" y2="1"><stop offset="0" stop-color="#fff"/><stop offset="1" stop-color="#a8a8aa"/></linearGradient></defs><circle cx="14" cy="72.7" r="4.2" fill="url(#mg)" stroke="#4c4c4e" stroke-width="1.2"/><path d="M12.2 73.2l1.4-0.9v1.8z" fill="#333"/><path d="M16.8 76.4l3 3.6" stroke="#1e1e20" stroke-width="1.8" stroke-linecap="round"/><circle cx="13.3" cy="93" r="5" fill="none" stroke="#1e1e20" stroke-width="1.3" stroke-dasharray="1.8 1.5"/><path d="M15 87.3c2.2 0.4 3.8 1.8 4.6 3.8" fill="none" stroke="#1e1e20" stroke-width="1.4"/><path d="M18 92.2l3.4-2.8l-0.2 3.6z" fill="#1e1e20"/><path d="M8.7 106.2l2.2-2.4h7v6.6l-2.2 2.6h-7z" fill="#f4f4f4" stroke="#3a3a3c" stroke-width="0.8"/><path d="M8.7 106.2h7v6.8M15.7 106.2l2.2-2.4" fill="none" stroke="#8a8a8c" stroke-width="0.7"/><path d="M16 110.5l5.2 4.6l-2 0.3l1 2l-1.2 0.6l-1-2.1l-1.6 1.2z" fill="#141416" stroke="#f4f4f4" stroke-width="0.9"/><path d="M8 121.5l7.6 3.2l-3 1.2l-1.4 3.2z" fill="#3a3a3c" stroke="#1e1e20" stroke-width="0.8"/><path d="M16 124.5v10M11 129.5h10" stroke="#1e1e20" stroke-width="1.2"/><path d="M16 123.2l1.8 2.4h-3.6zM16 136l1.8-2.4h-3.6zM22.2 129.5l-2.4 1.8v-3.6zM9.8 129.5l2.4 1.8v-3.6z" fill="#1e1e20"/><ellipse cx="15" cy="145.6" rx="6.4" ry="3.4" transform="rotate(-14 15 145.6)" fill="none" stroke="#2a2a2c" stroke-width="1.2" stroke-dasharray="2.6 0.7"/><path d="M9.2 148.5l0.6 2.4" stroke="#2a2a2c" stroke-width="1.1"/><path d="M14.3 158l1 3.6l3.2-2l-2 3.2l3.6 1l-3.6 1l2 3.2l-3.2-2l-1 3.6l-1-3.6l-3.2 2l2-3.2l-3.6-1l3.6-1l-2-3.2l3.2 2z" fill="#2c2c2e"/><circle cx="14.3" cy="163.8" r="2.1" fill="#fff"/><path d="M16.5 166l4.2 4.6" stroke="#e8e8e8" stroke-width="1.6" stroke-linecap="round"/><path d="M16.5 166l4.2 4.6" stroke="#444" stroke-width="0.5" stroke-dasharray="0.1 0"/><path d="M18.6 176.6l-5.2 9.2l-2 3.8" stroke="#1e1e20" stroke-width="1.8" stroke-linecap="round"/><circle cx="17.8" cy="177.8" r="1.9" fill="#2a2a2c"/><path d="M16.2 181.2l-3.4 6.2" stroke="#bbb" stroke-width="0.7"/></svg>
<div class="a" style="left:1.5px;top:193.3px;width:27px;height:0.9px;background:#58585a;"></div>
<div class="a" style="left:8.3px;top:197.3px;width:12.8px;height:13px;background:#f6abab;"></div>
<svg class="a" style="left:8.3px;top:197.3px;" width="12.8" height="13" viewBox="0 0 12.8 13"><path d="M4.4 0.6c1.2-0.6 2.4-0.2 2.8 1l0.8 3.2l3.2 6.4l-1 1.2l-3.4-3.6l-1.2-2.4l-1.4-2.4c-0.7-1.2-0.7-2.8 0.2-3.4z" fill="#f2f2f2" stroke="#222" stroke-width="0.8"/><path d="M5.6 3.2l3.6 7.2" stroke="#333" stroke-width="0.7"/><path d="M9.4 9.6l1.8 2.8l-2.6-1.8z" fill="#111"/></svg>
<div class="a" style="left:8.3px;top:216px;width:12.8px;height:12.4px;background:#000;"></div>
<svg class="a" style="left:8.3px;top:216px;" width="12.8" height="12.4" viewBox="0 0 12.8 12.4"><path d="M3.2 2.2l2.4-1.4l5 6l-0.4 4.4l-4.2-1.8z" fill="#f2f2f2"/><path d="M3.2 2.2l2.4-1.4l1.2 1.4l-2.6 1.6z" fill="#9a9a9c"/><path d="M4.2 3.8l2.6-1.6" stroke="#333" stroke-width="0.5"/></svg>
<svg class="a" style="left:0px;top:230px;" width="29" height="54" viewBox="0 230 29 54"><path d="M20.2 233.6l-6.8 6.6" stroke="#e2e2e2" stroke-width="1.9" stroke-linecap="round"/><path d="M20.6 234.4l-6.6 6.4" stroke="#555" stroke-width="0.6"/><path d="M9.2 243.4c0.6-2 2.6-3.6 4.6-3l1 1.2c0.2 2-1.8 3.6-5.6 1.8z" fill="#e8e8e8" stroke="#222" stroke-width="0.7"/><path d="M9 244.2c3 1.6 6.2 1 9.4 0.2l-2.4 1.6h-5.2z" fill="#3a3a3c"/><path d="M14.4 256.8l6.6-5v7.4z" fill="#9c9c9e" opacity="0.9"/><rect x="12.2" y="253" width="2.4" height="2.6" fill="#e8e8e8" stroke="#333" stroke-width="0.5"/><path d="M9.2 259.2c0-2.6 1.6-3.8 4.2-3.8s4.2 1.2 4.2 3.8v3.6c0 1.6-8.4 1.6-8.4 0z" fill="#ececec" stroke="#2a2a2c" stroke-width="0.8"/><path d="M9.4 260.2c2.6 1 5.4 1 8 0" fill="none" stroke="#2a2a2c" stroke-width="0.9"/><path d="M13 271.2l0.9 3.4l3.4 0.9l-3.4 0.9l-0.9 3.4l-0.9-3.4l-3.4-0.9l3.4-0.9z" fill="#1e1e20"/><path d="M17.6 277.4l0.6 2l2 0.6l-2 0.6l-0.6 2l-0.6-2l-2-0.6l2-0.6z" fill="#1e1e20"/></svg>
<div class="a" style="left:5.6px;top:286.7px;width:17.5px;height:16.4px;background:linear-gradient(#7391a6,#65859b);border-radius:1.5px;"></div>
<svg class="a" style="left:7.6px;top:288.2px;" width="14" height="14" viewBox="0 0 14 14"><path d="M11.600 1.800L12.900 3.200L9.200 12.600L7 13.200L8.100 9L9.600 8.700Z" fill="#1e1e20"/><path d="M3.800 1.200L11.600 1.800L9.600 8.800L1.600 8Z" fill="url(#wg)" stroke="#1e1e20" stroke-width="0.700"/><path d="M1.500 8.200L8.200 9L7.100 13.200L0.400 12.400Z" fill="#fdfdfd" stroke="#2a2a2c" stroke-width="0.600"/></svg>
<svg class="a" style="left:0px;top:304px;" width="29" height="18" viewBox="0 304 29 18"><path d="M12.4 306.4c1.6 2.6 3.6 4.8 3.6 7.2c0 2.4-1.6 3.8-3.6 3.8s-3.6-1.4-3.6-3.8c0-2.4 2-4.6 3.6-7.2z" fill="#1c1c1e"/><path d="M17.4 306.4c1.6 2.6 3.6 4.8 3.6 7.2c0 2.4-1.6 3.8-3.6 3.8s-3.6-1.4-3.6-3.8c0-2.4 2-4.6 3.6-7.2z" fill="#f2f2f2" stroke="#555" stroke-width="0.4"/><path d="M14.9 310.6c0.7 1 1.1 2 1.1 3c0 1.6-0.5 2.6-1.1 3.2c-0.6-0.6-1.1-1.6-1.1-3.2c0-1 0.4-2 1.1-3z" fill="#8a8a8c"/></svg>
<div class="a" style="left:1.5px;top:323.2px;width:27px;height:0.9px;background:#58585a;"></div>
<div class="a" style="left:9.2px;top:328.7px;width:10.8px;height:10.2px;background:linear-gradient(135deg,#000 10%,#fff 95%);border:0.7px solid #2a2a2c;"></div>
<svg class="a" style="left:0px;top:342px;" width="29" height="130" viewBox="0 342 29 130"><path d="M11.6 349l5.4-3.2l4.2 6.6l-5.6 3.4z" fill="#f0f0f0" stroke="#1e1e20" stroke-width="0.8"/><path d="M11.6 349l5.4-3.2" stroke="#1e1e20" stroke-width="1.6"/><path d="M14.6 346.6c0.4-2.2 3-3 4-1.2" fill="none" stroke="#1e1e20" stroke-width="0.9"/><path d="M11.4 349.4c-2.2 0.8-3.8 2.6-3.2 5c1.2-1.6 2.6-2.2 4.6-2z" fill="#1e1e20"/><path d="M9 375.6l11.6-9.8" stroke="#1e1e20" stroke-width="1.3"/><path d="M10.2 384.2h9v2l-9 2.6zM10.2 391.2l9-2.6v5h-9z" fill="#fafafa"/><path d="M10.6 402.2l9 8.6h-9z" fill="#8fd0f4" stroke="#1b76b8" stroke-width="1.2" stroke-linejoin="round"/><path d="M12.6 406.4l2.4 2.6h-2.4z" fill="#78797b"/><ellipse cx="15" cy="442.6" rx="6.3" ry="5.2" fill="#fbfbfb" stroke="#9a9a9c" stroke-width="0.5"/><path d="M15.4 447l2 2.6l0.6-3z" fill="#fbfbfb"/><path d="M10 457v10.4" stroke="#2a2a2c" stroke-width="1"/><path d="M10 457.2h8.4" stroke="#3a3a3c" stroke-width="1"/><rect x="9" y="456.2" width="2" height="2" fill="#eee"/><path d="M12.6 459.4l7.2 3.6l-3.2 0.8l-0.6 3.2z" fill="#f2f2f2" stroke="#1c1c1e" stroke-width="0.9"/></svg>
<div class="t" style="left:8px;top:415px;font-family:'Liberation Serif',serif;font-size:19.5px;line-height:20px;color:#1e1e20;">A</div>
<div class="a" style="left:1.5px;top:471px;width:27px;height:0.9px;background:#58585a;"></div>
<div class="a" style="left:11.8px;top:483px;width:16px;height:15.8px;background:#000;"></div>
<div class="a" style="left:1.5px;top:472.5px;width:16.5px;height:16.5px;background:#000;border:1.3px solid #62b4e6;box-shadow:inset 0 0 0 1px #d8d8d8;"></div>
<div class="a" style="left:1.8px;top:500.2px;width:26px;height:7px;background:#fff;background:conic-gradient(#58585a 25%,#fff 0 50%,#58585a 0 75%,#fff 0) 0px 0px/7px 7px;border-radius:1px;"></div>
<!-- p_color -->
<div class="a" style="left:30px;top:370px;width:123.5px;height:11px;background:#565658;"></div>
<div class="a" style="left:30.8px;top:370.6px;width:10.4px;height:9.8px;background:#515153;border:0.5px solid #636365;"></div><svg class="a" style="left:30.8px;top:370.6px;" width="10.4" height="9.8" viewBox="0 0 12 11.5"><path d="M2.6 3.2l2.4 2.5l-2.4 2.5z" fill="#8f8f91"/><path d="M5.8 3.6h3.6M5.8 5.7h3.6M5.8 7.8h3.6" stroke="#8f8f91" stroke-width="0.9"/></svg>
<div class="a" style="left:44px;top:370.3px;width:30.3px;height:11.5px;background:#7a7b7d;border-top:0.6px solid #8e8f91;"></div>
<div class="a" style="left:46.7px;top:371.8px;width:12.4px;height:2.5px;background:linear-gradient(90deg,#fff,#f00 35%);"></div>
<div class="a" style="left:46.7px;top:375.3px;width:12.4px;height:2.5px;background:linear-gradient(90deg,#fff,#0d0 35%);"></div>
<div class="a" style="left:46.7px;top:378.8px;width:12.4px;height:2.5px;background:linear-gradient(90deg,#fff,#00f 35%);"></div>
<div class="t" style="left:61.7px;top:371.8px;font-size:8.4px;line-height:10px;color:#dcdcdc;transform:scaleX(0.7934);transform-origin:0 0;">Col</div>
<div class="a" style="left:75.3px;top:371px;width:18.7px;height:10px;background:#6b6c6e;border:0.5px solid #7e7f81;"></div>
<div class="a" style="left:95.2px;top:371px;width:18.4px;height:10px;background:#6b6c6e;border:0.5px solid #7e7f81;"></div>
<div class="a" style="left:115px;top:371px;width:18px;height:10px;background:#6b6c6e;border:0.5px solid #7e7f81;"></div>
<div class="a" style="left:134.3px;top:371px;width:18.7px;height:10px;background:#6b6c6e;border:0.5px solid #7e7f81;"></div>
<svg class="a" style="left:75px;top:371px;" width="78" height="10" viewBox="75 371 78 10"><g fill="none" stroke="#555557" stroke-width="0.9"><rect x="81" y="373.8" width="7" height="5.6"/><path d="M80 372.8h9"/><rect x="99.5" y="372.6" width="4" height="3.4"/><rect x="105" y="372.6" width="4" height="3.4"/><rect x="102.2" y="376.6" width="4" height="3.4"/><path d="M119.5 379.6v-4.6l6-2.2h3.6v6.8z" fill="#58585a"/><rect x="138.5" y="373.6" width="10" height="5.6"/><path d="M138.5 375.4h10"/></g></svg>
<div class="a" style="left:43px;top:385.8px;width:104px;height:57.6px;background:#7a7b7d;border:0.7px solid #58585a;border-radius:1px;"></div>
<div class="a" style="left:31.7px;top:387.3px;width:12px;height:23px;background:#7a7b7d;border:0.7px solid #58585a;border-right:none;border-radius:2.5px 0 0 2.5px;"></div>
<div class="a" style="left:32.2px;top:410.3px;width:11px;height:16.6px;background:#727375;border:0.7px solid #5c5c5e;border-right:none;border-radius:2.5px 0 0 2.5px;"></div>
<div class="a" style="left:32.2px;top:427px;width:11px;height:15.8px;background:#727375;border:0.7px solid #5c5c5e;border-right:none;border-radius:2.5px 0 0 2.5px;"></div>
<div class="t" style="left:22.6px;top:394px;width:30px;height:10px;text-align:center;font-size:7.6px;line-height:10px;color:#b9babc;transform:rotate(-90deg);transform-origin:50% 50%;">RGB</div>
<div class="t" style="left:22.6px;top:413.5px;width:30px;height:10px;text-align:center;font-size:7.4px;line-height:10px;color:#8e8f91;transform:rotate(-90deg);transform-origin:50% 50%;">HS</div>
<div class="t" style="left:22.6px;top:430px;width:30px;height:10px;text-align:center;font-size:7.4px;line-height:10px;color:#8e8f91;transform:rotate(-90deg);transform-origin:50% 50%;">CM</div>
<div class="t" style="left:44.7px;top:391.5px;font-size:9px;line-height:11px;color:#f2f2f2;transform:scaleX(0.8000);transform-origin:0 0;">R</div>
<div class="a" style="left:56.3px;top:394px;width:54.6px;height:5.8px;background:linear-gradient(90deg,#000 4%,#ff0a0a 98%);border:0.5px solid #4a4a4c;"></div>
<svg class="a" style="left:52.8px;top:400px;" width="7" height="4" viewBox="0 0 7 4"><path d="M3.5 0.3l3 3.2h-6z" fill="#6e6f71" stroke="#58585a" stroke-width="0.5"/></svg>
<div class="t" style="left:123.7px;top:391px;font-size:9.6px;line-height:12px;color:#f2f2f2;transform:scaleX(0.8617);transform-origin:0 0;">0</div>
<svg class="a" style="left:138.2px;top:392px;" width="5.8" height="10" viewBox="0 0 6 9"><path d="M0.3 3.6L3 0.4L5.7 3.6z M0.3 5.4L3 8.6L5.7 5.4z" fill="#2e2e30"/></svg>
<div class="t" style="left:44.7px;top:409px;font-size:9px;line-height:11px;color:#f2f2f2;transform:scaleX(0.7428);transform-origin:0 0;">G</div>
<div class="a" style="left:56.3px;top:411.5px;width:54.6px;height:5.8px;background:linear-gradient(90deg,#000 4%,#0ae60a 98%);border:0.5px solid #4a4a4c;"></div>
<svg class="a" style="left:52.8px;top:417.5px;" width="7" height="4" viewBox="0 0 7 4"><path d="M3.5 0.3l3 3.2h-6z" fill="#6e6f71" stroke="#58585a" stroke-width="0.5"/></svg>
<div class="t" style="left:123.7px;top:408.5px;font-size:9.6px;line-height:12px;color:#f2f2f2;transform:scaleX(0.8617);transform-origin:0 0;">0</div>
<svg class="a" style="left:138.2px;top:409.5px;" width="5.8" height="10" viewBox="0 0 6 9"><path d="M0.3 3.6L3 0.4L5.7 3.6z M0.3 5.4L3 8.6L5.7 5.4z" fill="#2e2e30"/></svg>
<div class="t" style="left:44.7px;top:426.7px;font-size:9px;line-height:11px;color:#f2f2f2;transform:scaleX(0.8662);transform-origin:0 0;">B</div>
<div class="a" style="left:56.3px;top:429.2px;width:54.6px;height:5.8px;background:linear-gradient(90deg,#000 4%,#0a0aff 98%);border:0.5px solid #4a4a4c;"></div>
<svg class="a" style="left:52.8px;top:435.2px;" width="7" height="4" viewBox="0 0 7 4"><path d="M3.5 0.3l3 3.2h-6z" fill="#6e6f71" stroke="#58585a" stroke-width="0.5"/></svg>
<div class="t" style="left:123.7px;top:426.2px;font-size:9.6px;line-height:12px;color:#f2f2f2;transform:scaleX(0.8617);transform-origin:0 0;">0</div>
<svg class="a" style="left:138.2px;top:427.2px;" width="5.8" height="10" viewBox="0 0 6 9"><path d="M0.3 3.6L3 0.4L5.7 3.6z M0.3 5.4L3 8.6L5.7 5.4z" fill="#2e2e30"/></svg>
<div class="a" style="left:149px;top:385px;width:4.6px;height:126px;background:linear-gradient(90deg,#58585a 30%,#646466 35%);"></div>
<div class="a" style="left:30.8px;top:446px;width:36.8px;height:16.6px;background:#000;border:1.2px solid #6cbcec;box-shadow:inset 0 0 0 1.2px #e6e6e6;border-radius:1px;"></div>
<div class="a" style="left:70.8px;top:446.2px;width:37.3px;height:16.2px;background:#000;"></div>
<div class="a" style="left:110.8px;top:446.2px;width:37.3px;height:16.2px;background:#fff;background:conic-gradient(#636365 25%,#fff 0 50%,#636365 0 75%,#fff 0) 0px 0px/7px 7px;"></div>
<!-- p_right -->
<div class="a" style="left:797px;top:33.8px;width:163px;height:13.8px;background:linear-gradient(#58585a,#5e5e60 12%,#505052);"></div>
<svg class="a" style="left:798px;top:37px;" width="8" height="8" viewBox="0 0 8 8"><path d="M0.8 0.5L3.2 4L0.8 7.5M4.2 0.5L6.6 4L4.2 7.5" fill="none" stroke="#a4a4a6" stroke-width="1.7"/></svg>
<svg class="a" style="left:817.5px;top:37px;" width="5" height="8" viewBox="0 0 5 8"><path d="M3.6 0.5L1.2 4L3.6 7.5" fill="none" stroke="#a4a4a6" stroke-width="1.7"/></svg>
<svg class="a" style="left:826.5px;top:37px;" width="8" height="8" viewBox="0 0 8 8"><path d="M3.2 0.5L0.8 4L3.2 7.5M6.6 0.5L4.2 4L6.6 7.5" fill="none" stroke="#a4a4a6" stroke-width="1.7"/></svg>
<svg class="a" style="left:836px;top:37px;" width="8" height="8" viewBox="0 0 8 8"><path d="M0.8 0.5L3.2 4L0.8 7.5M4.2 0.5L6.6 4L4.2 7.5" fill="none" stroke="#a4a4a6" stroke-width="1.7"/></svg>
<div class="a" style="left:824.6px;top:34.5px;width:0.8px;height:13px;background:#4a4a4c;"></div>
<div class="a" style="left:834.6px;top:34.5px;width:0.8px;height:13px;background:#4a4a4c;"></div>
<div class="a" style="left:796.5px;top:47.5px;width:29px;height:463.5px;background:linear-gradient(90deg,#4a4a4c,#58585a 30%,#6a6a6c);"></div>
<div class="a" style="left:825.3px;top:47.5px;width:10.5px;height:463.5px;background:linear-gradient(90deg,#4e4e50,#78797b 85%,#5a5a5c 86%,#6a6a6c);"></div>
<div class="a" style="left:796.2px;top:47.5px;width:1px;height:463.5px;background:#3e3e40;"></div>
<div class="a" style="left:799.6px;top:49.8px;width:23px;height:26.9px;background:linear-gradient(#7d7e80,#78797b);border:1px solid #4e4e50;"></div>
<svg class="a" style="left:802px;top:55.3px;" width="18" height="17" viewBox="0 0 18 17"><defs><linearGradient id="fga" x1="0" y1="0" x2="1" y2="1"><stop offset="0" stop-color="#d8d8d8"/><stop offset="0.6" stop-color="#8a8b8d"/><stop offset="1" stop-color="#7a7b7d"/></linearGradient><linearGradient id="pga" x1="0" y1="0" x2="1" y2="1"><stop offset="0" stop-color="#a0a0a2"/><stop offset="1" stop-color="#fdfdfd"/></linearGradient></defs><path d="M1 2c0-0.8 0.5-1.3 1.3-1.3h3.2l1.2 1.4h4.3v7.5H1z" fill="url(#fga)" stroke="#4a4a4c" stroke-width="0.8"/><path d="M7.2 7.2h5.6l2.4 2v5.6h-8z" fill="url(#pga)" stroke="#6a6a6c" stroke-width="0.5"/><path d="M13.8 5.2v4.2h1.6l-2.4 3l-2.4-3h1.6v-4.2z" fill="#0c0c0e"/></svg>
<div class="a" style="left:799.6px;top:80.7px;width:23px;height:27.1px;background:linear-gradient(#7d7e80,#78797b);border:1px solid #4e4e50;"></div>
<svg class="a" style="left:802px;top:86.2px;" width="18" height="17" viewBox="0 0 18 17"><defs><linearGradient id="fgb" x1="0" y1="0" x2="1" y2="1"><stop offset="0" stop-color="#d8d8d8"/><stop offset="0.6" stop-color="#8a8b8d"/><stop offset="1" stop-color="#7a7b7d"/></linearGradient><linearGradient id="pgb" x1="0" y1="0" x2="1" y2="1"><stop offset="0" stop-color="#a0a0a2"/><stop offset="1" stop-color="#fdfdfd"/></linearGradient></defs><path d="M1 2c0-0.8 0.5-1.3 1.3-1.3h3.2l1.2 1.4h4.3v7.5H1z" fill="url(#fgb)" stroke="#4a4a4c" stroke-width="0.8"/><path d="M7.2 7.2h5.6l2.4 2v5.6h-8z" fill="url(#pgb)" stroke="#6a6a6c" stroke-width="0.5"/><path d="M13.8 5.2v4.2h1.6l-2.4 3l-2.4-3h1.6v-4.2z" fill="#0c0c0e"/></svg>
<div class="a" style="left:799.6px;top:111.5px;width:23px;height:26.9px;background:linear-gradient(#7d7e80,#78797b);border:1px solid #4e4e50;"></div>
<svg class="a" style="left:802px;top:117px;" width="18" height="17" viewBox="0 0 18 17"><defs><linearGradient id="fgc" x1="0" y1="0" x2="1" y2="1"><stop offset="0" stop-color="#d8d8d8"/><stop offset="0.6" stop-color="#8a8b8d"/><stop offset="1" stop-color="#7a7b7d"/></linearGradient><linearGradient id="pgc" x1="0" y1="0" x2="1" y2="1"><stop offset="0" stop-color="#a0a0a2"/><stop offset="1" stop-color="#fdfdfd"/></linearGradient></defs><path d="M1 2c0-0.8 0.5-1.3 1.3-1.3h3.2l1.2 1.4h4.3v7.5H1z" fill="url(#fgc)" stroke="#4a4a4c" stroke-width="0.8"/><path d="M7.2 7.2h5.6l2.4 2v5.6h-8z" fill="url(#pgc)" stroke="#6a6a6c" stroke-width="0.5"/><path d="M13.8 5.2v4.2h1.6l-2.4 3l-2.4-3h1.6v-4.2z" fill="#0c0c0e"/></svg>
<div class="a" style="left:799.6px;top:142.6px;width:23px;height:52.3px;background:linear-gradient(#7d7e80,#78797b);border:1px solid #4e4e50;"></div>
<svg class="a" style="left:802px;top:148.1px;" width="18" height="17" viewBox="0 0 18 17"><defs><linearGradient id="fgd" x1="0" y1="0" x2="1" y2="1"><stop offset="0" stop-color="#d8d8d8"/><stop offset="0.6" stop-color="#8a8b8d"/><stop offset="1" stop-color="#7a7b7d"/></linearGradient><linearGradient id="pgd" x1="0" y1="0" x2="1" y2="1"><stop offset="0" stop-color="#a0a0a2"/><stop offset="1" stop-color="#fdfdfd"/></linearGradient></defs><path d="M1 2c0-0.8 0.5-1.3 1.3-1.3h3.2l1.2 1.4h4.3v7.5H1z" fill="url(#fgd)" stroke="#4a4a4c" stroke-width="0.8"/><rect x="7" y="6" width="8.4" height="8.4" fill="#fff"/><rect x="7" y="6" width="1.4" height="1.4" fill="#222"/><rect x="7" y="8.8" width="1.4" height="1.4" fill="#222"/><rect x="7" y="11.6" width="1.4" height="1.4" fill="#222"/><rect x="8.4" y="7.4" width="1.4" height="1.4" fill="#222"/><rect x="8.4" y="10.2" width="1.4" height="1.4" fill="#222"/><rect x="8.4" y="13" width="1.4" height="1.4" fill="#222"/><rect x="9.8" y="6" width="1.4" height="1.4" fill="#222"/><rect x="9.8" y="8.8" width="1.4" height="1.4" fill="#222"/><rect x="9.8" y="11.6" width="1.4" height="1.4" fill="#222"/><rect x="11.2" y="7.4" width="1.4" height="1.4" fill="#222"/><rect x="11.2" y="10.2" width="1.4" height="1.4" fill="#222"/><rect x="11.2" y="13" width="1.4" height="1.4" fill="#222"/><rect x="12.6" y="6" width="1.4" height="1.4" fill="#222"/><rect x="12.6" y="8.8" width="1.4" height="1.4" fill="#222"/><rect x="12.6" y="11.6" width="1.4" height="1.4" fill="#222"/><rect x="14" y="7.4" width="1.4" height="1.4" fill="#222"/><rect x="14" y="10.2" width="1.4" height="1.4" fill="#222"/><rect x="14" y="13" width="1.4" height="1.4" fill="#222"/></svg>
<svg class="a" style="left:802px;top:173.1px;" width="18" height="17" viewBox="0 0 18 17"><defs><linearGradient id="fge" x1="0" y1="0" x2="1" y2="1"><stop offset="0" stop-color="#d8d8d8"/><stop offset="0.6" stop-color="#8a8b8d"/><stop offset="1" stop-color="#7a7b7d"/></linearGradient><linearGradient id="pge" x1="0" y1="0" x2="1" y2="1"><stop offset="0" stop-color="#a0a0a2"/><stop offset="1" stop-color="#fdfdfd"/></linearGradient></defs><path d="M1 2c0-0.8 0.5-1.3 1.3-1.3h3.2l1.2 1.4h4.3v7.5H1z" fill="url(#fge)" stroke="#4a4a4c" stroke-width="0.8"/><path d="M7.2 7.2h5.6l2.4 2v5.6h-8z" fill="url(#pge)" stroke="#6a6a6c" stroke-width="0.5"/><path d="M13.8 5.2v4.2h1.6l-2.4 3l-2.4-3h1.6v-4.2z" fill="#0c0c0e"/></svg>
<div class="a" style="left:799.6px;top:198.8px;width:23px;height:27.1px;background:linear-gradient(#7d7e80,#78797b);border:1px solid #4e4e50;"></div>
<svg class="a" style="left:802px;top:204.3px;" width="18" height="17" viewBox="0 0 18 17"><defs><linearGradient id="fgf" x1="0" y1="0" x2="1" y2="1"><stop offset="0" stop-color="#d8d8d8"/><stop offset="0.6" stop-color="#8a8b8d"/><stop offset="1" stop-color="#7a7b7d"/></linearGradient><linearGradient id="pgf" x1="0" y1="0" x2="1" y2="1"><stop offset="0" stop-color="#a0a0a2"/><stop offset="1" stop-color="#fdfdfd"/></linearGradient></defs><path d="M1 2c0-0.8 0.5-1.3 1.3-1.3h3.2l1.2 1.4h4.3v7.5H1z" fill="url(#fgf)" stroke="#4a4a4c" stroke-width="0.8"/><rect x="7" y="6" width="8.6" height="8.6" fill="#9c9c9e" stroke="#58585a" stroke-width="0.5"/><path d="M7 6h8.600l-4.300 4.300zM7 14.600h8.600l-4.300-4.300z" fill="#f6f6f6"/><path d="M7 6l8.600 8.600M15.600 6l-8.600 8.600" stroke="#6a6a6c" stroke-width="0.500"/></svg>
<div class="a" style="left:799.6px;top:229.6px;width:23px;height:27.1px;background:linear-gradient(#7d7e80,#78797b);border:1px solid #4e4e50;"></div>
<svg class="a" style="left:802px;top:235.1px;" width="18" height="17" viewBox="0 0 18 17"><defs><linearGradient id="fgg" x1="0" y1="0" x2="1" y2="1"><stop offset="0" stop-color="#d8d8d8"/><stop offset="0.6" stop-color="#8a8b8d"/><stop offset="1" stop-color="#7a7b7d"/></linearGradient><linearGradient id="pgg" x1="0" y1="0" x2="1" y2="1"><stop offset="0" stop-color="#a0a0a2"/><stop offset="1" stop-color="#fdfdfd"/></linearGradient></defs><path d="M1 2c0-0.8 0.5-1.3 1.3-1.3h3.2l1.2 1.4h4.3v7.5H1z" fill="url(#fgg)" stroke="#4a4a4c" stroke-width="0.8"/><rect x="7" y="6" width="9" height="8.6" fill="#f6f6f6" stroke="#3a3a3c" stroke-width="0.7"/><path d="M7.6 14l2.2-5l1.6 2.6l1.2-3.6l2.8 6z" fill="#111"/></svg>
<div class="a" style="left:799.6px;top:260.7px;width:23px;height:27px;background:linear-gradient(#7d7e80,#78797b);border:1px solid #4e4e50;"></div>
<svg class="a" style="left:802px;top:266.2px;" width="18" height="17" viewBox="0 0 18 17"><defs><linearGradient id="fgh" x1="0" y1="0" x2="1" y2="1"><stop offset="0" stop-color="#d8d8d8"/><stop offset="0.6" stop-color="#8a8b8d"/><stop offset="1" stop-color="#7a7b7d"/></linearGradient><linearGradient id="pgh" x1="0" y1="0" x2="1" y2="1"><stop offset="0" stop-color="#a0a0a2"/><stop offset="1" stop-color="#fdfdfd"/></linearGradient></defs><path d="M1 2c0-0.8 0.5-1.3 1.3-1.3h3.2l1.2 1.4h4.3v7.5H1z" fill="url(#fgh)" stroke="#4a4a4c" stroke-width="0.8"/><rect x="7" y="7" width="9" height="7.4" fill="#9a9a9c" stroke="#2a2a2c" stroke-width="0.8"/><path d="M8.6 13l6.6-6.2l1 1.2l-6.4 5.8z" fill="#0c0c0e"/></svg>
<div class="a" style="left:799.6px;top:291.5px;width:23px;height:27.1px;background:linear-gradient(#7d7e80,#78797b);border:1px solid #4e4e50;"></div>
<svg class="a" style="left:802px;top:297px;" width="18" height="17" viewBox="0 0 18 17"><defs><linearGradient id="fgi" x1="0" y1="0" x2="1" y2="1"><stop offset="0" stop-color="#d8d8d8"/><stop offset="0.6" stop-color="#8a8b8d"/><stop offset="1" stop-color="#7a7b7d"/></linearGradient><linearGradient id="pgi" x1="0" y1="0" x2="1" y2="1"><stop offset="0" stop-color="#a0a0a2"/><stop offset="1" stop-color="#fdfdfd"/></linearGradient></defs><path d="M1 2c0-0.8 0.5-1.3 1.3-1.3h3.2l1.2 1.4h4.3v7.5H1z" fill="url(#fgi)" stroke="#4a4a4c" stroke-width="0.8"/><rect x="7.4" y="5.6" width="8" height="9.6" fill="#fff"/><path d="M7.4 9.4h8M7.4 12.2h8M11 5.6v3.8" stroke="#7a7b7d" stroke-width="0.9"/></svg>
<div class="a" style="left:835.8px;top:47.5px;width:124.2px;height:463.5px;background:#7a7b7d;"></div>
<div class="a" style="left:835.8px;top:48.6px;width:124.2px;height:12.2px;background:#565658;border-top:0.8px solid #6c6c6e;"></div>
<div class="a" style="left:837.2px;top:49.5px;width:11px;height:11px;background:#515153;border:0.5px solid #636365;"></div><svg class="a" style="left:837.2px;top:49.5px;" width="11" height="11" viewBox="0 0 12 11.5"><path d="M2.6 3.2l2.4 2.5l-2.4 2.5z" fill="#8f8f91"/><path d="M5.8 3.6h3.6M5.8 5.7h3.6M5.8 7.8h3.6" stroke="#8f8f91" stroke-width="0.9"/></svg>
<div class="a" style="left:848.7px;top:50.4px;width:50px;height:11.8px;background:#7a7b7d;border-top:0.6px solid #8e8f91;"></div>
<svg class="a" style="left:851.5px;top:50.5px;" width="12" height="11" viewBox="0 0 12 11"><rect x="3.6" y="3.8" width="7.4" height="6" fill="none" stroke="#d8d8d8" stroke-width="0.9"/><rect x="0.9" y="0.9" width="7.6" height="6" rx="1" fill="#fff" stroke="#e01818" stroke-width="1.4"/><path d="M3.6 7.6v1.6" stroke="#444" stroke-width="0.8"/></svg>
<div class="t" style="left:866.5px;top:51.6px;font-size:8.6px;line-height:10px;color:#e2e2e2;transform:scaleX(0.7880);transform-origin:0 0;">Navigator</div>
<div class="a" style="left:836.6px;top:64px;width:123.4px;height:95px;background:#444444;"></div>
<div class="a" style="left:877.8px;top:71.8px;width:40px;height:80px;background:#fff;"></div>
<svg class="a" style="left:890px;top:85px;" width="14" height="14" viewBox="0 0 14 14"><path d="M7.2 1.2C4 3 1.8 6 2 8.6C2.2 11.4 5 12.4 7.6 11.8C9.6 11.4 11 10.4 11.6 9z" fill="#000"/><ellipse cx="8" cy="6.6" rx="3.9" ry="4.2" fill="#d4d4d4"/><ellipse cx="7.8" cy="6.6" rx="2.8" ry="3" fill="#f4f4f4"/></svg>
<div class="a" style="left:875px;top:78.4px;width:46.8px;height:31.8px;background:transparent;border:1.4px solid #f01010;border-bottom-color:#f47a7a;"></div>
<svg class="a" style="left:839.2px;top:164.5px;" width="43.4" height="8.5" viewBox="0 0 43.4 8.5"><rect width="43.4" height="8.5" fill="#7c7d7f"/><rect width="23.400" height="8.500" fill="#8a8b8d"/><path d="M0 8.500L43.400 0.400V8.500z" fill="#3a3a3c"/><path d="M0 8.500L23.400 4.100V8.500z" fill="#5c5c5e"/></svg>
<div class="a" style="left:839.2px;top:164.5px;width:43.4px;height:8.5px;background:transparent;border:0.6px solid #58585a;"></div>
<div class="a" style="left:839.200px;top:164.500px;width:43.400px;height:8.500px;overflow:hidden"><div class="t" style="left:1.3px;top:-0.7px;font-size:9.8px;line-height:12px;color:#e8e8e8;transform:scaleX(0.7079);transform-origin:0 0;">77.2</div></div>
<div class="a" style="left:862.2px;top:161.9px;width:1.8px;height:13px;background:#666668;"></div>
<svg class="a" style="left:839.2px;top:178.5px;" width="43.4" height="8.4" viewBox="0 0 43.4 8.4"><rect width="43.400" height="8.400" fill="#7c7d7f"/><rect width="21.400" height="8.400" fill="#8a8b8d"/><path d="M0 8.400C12 8.400 18 7.200 22 5.600L33.800 0.300L43.400 8.400z" fill="#3a3a3c"/><path d="M0 8.400C12 8.400 17 7.400 21.400 5.800V8.400z" fill="#5c5c5e"/></svg>
<div class="a" style="left:839.2px;top:178.5px;width:43.4px;height:8.4px;background:transparent;border:0.6px solid #58585a;"></div>
<div class="a" style="left:839.200px;top:178.500px;width:43.400px;height:8.400px;overflow:hidden"><div class="t" style="left:3.3px;top:-0.7px;font-size:9.8px;line-height:12px;color:#e8e8e8;transform:scaleX(0.7047);transform-origin:0 0;">0.0</div></div>
<div class="a" style="left:860.2px;top:176px;width:1.8px;height:13.5px;background:#666668;"></div>
<svg class="a" style="left:885px;top:160px;" width="75" height="30" viewBox="885 160 75 30"><circle cx="893" cy="168" r="4" fill="#f0f0f0" stroke="#3a3a3c" stroke-width="1"/><path d="M895.6 171l2.800 3" stroke="#1e1e20" stroke-width="1.7" stroke-linecap="round"/><path d="M891.2 168h3.6" stroke="#2a2a2c" stroke-width="1"/><circle cx="907" cy="168" r="4" fill="#f0f0f0" stroke="#3a3a3c" stroke-width="1"/><path d="M909.6 171l2.800 3" stroke="#1e1e20" stroke-width="1.7" stroke-linecap="round"/><path d="M905.2 168h3.6" stroke="#2a2a2c" stroke-width="1"/><path d="M907 166.2v3.6" stroke="#2a2a2c" stroke-width="1"/><rect x="916" y="163" width="11" height="10.6" fill="#0c0c0e"/><rect x="918.6" y="165.4" width="5.8" height="5.8" fill="none" stroke="#6a6a6c" stroke-width="0.9"/><rect x="932.6" y="164" width="6" height="4.4" fill="#f4f4f4" stroke="#1e1e20" stroke-width="0.8"/><rect x="935.4" y="166.4" width="7" height="5.6" fill="#f4f4f4" stroke="#1e1e20" stroke-width="0.8"/><path d="M935 166l5.4 4.6" stroke="#111" stroke-width="1"/><rect x="946.4" y="163.6" width="11.4" height="9" fill="#f8f8f8" stroke="#1e1e20" stroke-width="0.9"/><path d="M948.4 165.4l7.4 5.6" stroke="#0c0c0e" stroke-width="1.5"/><path d="M955.8 171v-2.8l-2.6 2.8z" fill="#0c0c0e"/><path d="M890.2 186.6c-0.6-3.8 1.8-6 4.2-6c2.6 0 4 2 3.8 5.4" fill="none" stroke="#141416" stroke-width="1.7"/><path d="M887.4 184.4h5.6l-2.6 3.6z" fill="#141416"/><path d="M910.4 186.6c0.6-3.8-1.8-6-4.2-6c-2.6 0-4 2-3.8 5.4" fill="none" stroke="#141416" stroke-width="1.7"/><path d="M913.2 184.4h-5.6l2.6 3.6z" fill="#141416"/><circle cx="921.4" cy="183" r="4.2" fill="none" stroke="#5c5c5e" stroke-width="1.4" stroke-dasharray="1.6 1.7"/><path d="M934.4 187.2c-0.8-3.2 0.6-6 3.4-6c2.8 0 4.2 2.8 3.4 6" fill="none" stroke="#1c1c1e" stroke-width="1.5"/><path d="M937.8 183.2l1.6 4.8h-3.2z" fill="#e8e8e8"/><path d="M933.4 184v4.2l2-2.1z" fill="#e8e8e8"/><path d="M955.6 181.6c-3.6-1.8-7 0.2-7 3c0 1.8 1.4 3 3 3.2" fill="none" stroke="#1c1c1e" stroke-width="1.5"/><path d="M953.6 179.4l3.6 2.2l-3.4 2.2z" fill="#1c1c1e"/><path d="M952.4 186h5M954.8 188.6l2.2-2.2l-2.2-1.4" stroke="#e8e8e8" stroke-width="0.9" fill="none"/></svg>
<div class="a" style="left:835.8px;top:191.5px;width:124.2px;height:12.5px;background:#565658;"></div>
<div class="a" style="left:837.2px;top:192.2px;width:10.6px;height:11px;background:#515153;border:0.5px solid #636365;"></div><svg class="a" style="left:837.2px;top:192.2px;" width="10.6" height="11" viewBox="0 0 12 11.5"><path d="M2.6 3.2l2.4 2.5l-2.4 2.5z" fill="#8f8f91"/><path d="M5.8 3.6h3.6M5.8 5.7h3.6M5.8 7.8h3.6" stroke="#8f8f91" stroke-width="0.9"/></svg>
<div class="a" style="left:848.5px;top:192.3px;width:36.2px;height:12px;background:#7a7b7d;border-top:0.6px solid #8e8f91;"></div>
<svg class="a" style="left:851px;top:193px;" width="12" height="11" viewBox="0 0 12 11"><g fill="#d8d8d8" stroke="#1e1e20" stroke-width="0.8"><ellipse cx="6" cy="8.6" rx="5" ry="1.8"/><ellipse cx="6" cy="6.2" rx="5" ry="1.8"/><ellipse cx="6" cy="3.8" rx="5" ry="1.8"/></g></svg>
<div class="t" style="left:866.8px;top:193.5px;font-size:8.8px;line-height:11px;color:#e2e2e2;transform:scaleX(0.7451);transform-origin:0 0;">Layer</div>
<div class="a" style="left:886px;top:193px;width:19px;height:11px;background:#6b6c6e;border:0.5px solid #7e7f81;border-bottom:none;"></div>
<div class="a" style="left:906.5px;top:193px;width:18px;height:11px;background:#6b6c6e;border:0.5px solid #7e7f81;border-bottom:none;"></div>
<div class="a" style="left:926px;top:193px;width:19px;height:11px;background:#6b6c6e;border:0.5px solid #7e7f81;border-bottom:none;"></div>
<svg class="a" style="left:886px;top:193px;" width="59" height="11" viewBox="0 0 59 11"><path d="M4 10c4-1 8-4 10-8" fill="none" stroke="#58585a" stroke-width="1"/><path d="M25 3h6v5h-6zM28 6c2-2 5-1 5 2c-1 2-4 2-5 0" fill="#ddd" stroke="#2a2a2c" stroke-width="0.8"/><path d="M46 9c2-1 3-3 4-5M49 9.5c2-1 3-3 4-5M52 10c1-1 2-2 3-4" fill="none" stroke="#5a5a5c" stroke-width="0.9"/></svg>
<div class="a" style="left:836.7px;top:207px;width:58.5px;height:13.3px;background:linear-gradient(#8b8c8e,#76777a);border:0.7px solid #58585a;border-radius:2.5px;"></div>
<div class="t" style="left:849.9px;top:208.2px;font-size:9px;line-height:11px;color:#ececec;transform:scaleX(0.7827);transform-origin:0 0;">Normal</div>
<svg class="a" style="left:887px;top:211.5px;" width="6" height="4" viewBox="0 0 6 4"><path d="M0.2 0.4h5.6l-2.8 3.2z" fill="#2c2c2e"/></svg>
<div class="a" style="left:899.4px;top:210.3px;width:27.6px;height:6.2px;background:#e8e8e8;background:conic-gradient(#b4b4b6 25%,#f0f0f0 0 50%,#b4b4b6 0 75%,#f0f0f0 0) 0px 0px/5.6px 5.6px;border:0.5px solid #58585a;"></div>
<div class="a" style="left:927.9px;top:206.6px;width:1.4px;height:14.2px;background:#68686a;"></div>
<div class="t" style="left:932.8px;top:207.2px;font-size:9.6px;line-height:12px;color:#f0f0f0;transform:scaleX(0.8055);transform-origin:0 0;">100</div>
<svg class="a" style="left:947.2px;top:208.6px;" width="6.4" height="10" viewBox="0 0 6 9"><path d="M0.3 3.6L3 0.4L5.7 3.6z M0.3 5.4L3 8.6L5.7 5.4z" fill="#2e2e30"/></svg>
<svg class="a" style="left:850px;top:221px;" width="60" height="15" viewBox="850 221 60 15"><ellipse cx="859.3" cy="228.4" rx="5.2" ry="3.5" fill="#dcdcdc" stroke="#1e1e20" stroke-width="1"/><ellipse cx="859.3" cy="229.2" rx="3.8" ry="1.8" fill="#0e0e10"/><path d="M873.5 223.4l1.3 2v2l0.9 6.2h-4.4l0.9-6.2v-2z" fill="#f0f0f0" stroke="#1e1e20" stroke-width="0.7"/><path d="M872.2 226.4h2.6" stroke="#111" stroke-width="0.9"/><path d="M869.6 224.4l2 0.8M877.4 224.4l-2 0.8" stroke="#d8d8d8" stroke-width="0.7"/><rect x="882.8" y="227.4" width="8.4" height="6.4" fill="#a8a8aa" stroke="#1e1e20" stroke-width="0.9"/><path d="M884.6 227.4v-1.6c0-3.2 4.8-3.2 4.8 0v1.6" fill="none" stroke="#1e1e20" stroke-width="1.3"/><rect x="886.2" y="229.4" width="1.6" height="2.4" fill="#1e1e20"/><rect x="895.4" y="226.8" width="5.6" height="4.2" fill="#e8e8e8" stroke="#1e1e20" stroke-width="0.8"/><path d="M896.6 226.8v-1c0-2.2 3.2-2.2 3.2 0v1" fill="none" stroke="#1e1e20" stroke-width="1"/><rect x="899.4" y="230.6" width="2.2" height="2.2" fill="#e8e8e8"/><rect x="902" y="228.2" width="2.2" height="2.2" fill="#e8e8e8"/><rect x="902" y="231" width="2.2" height="2.2" fill="#e8e8e8"/></svg>
<div class="a" style="left:909.2px;top:222px;width:21.5px;height:13px;background:#737476;border:0.7px solid #88898b;border-radius:2px;"></div>
<div class="a" style="left:932.6px;top:222px;width:21.5px;height:13px;background:#737476;border:0.7px solid #88898b;border-radius:2px;"></div>
<svg class="a" style="left:909.5px;top:221.8px;" width="45" height="13.4" viewBox="0 0 45 13.4"><path d="M4 8l3-4l3 3l3-2" fill="none" stroke="#6a6b6d" stroke-width="1.2"/><path d="M9 8.4l3.6 3.6M12.6 8.4l-3.6 3.6" stroke="#6a6b6d" stroke-width="1"/><path d="M15.6 5.6h4.2l-2.1 2.6z" fill="#6a6b6d"/><path d="M26.6 3.2v8h8M26.6 11.2l8.4-8" fill="none" stroke="#6a6b6d" stroke-width="1.1"/><path d="M33 8.6l3.4 3.4M36.4 8.6l-3.4 3.4" stroke="#6a6b6d" stroke-width="1"/><path d="M38.6 5.6h4.2l-2.1 2.6z" fill="#6a6b6d"/></svg>
<div class="a" style="left:838px;top:236.8px;width:117px;height:0.8px;background:#8a8b8d;"></div>
<svg class="a" style="left:843px;top:238px;" width="112" height="14" viewBox="843 238 112 14"><path d="M845 239.7h10v7.6l-2.6 2.8h-7.4z" fill="#fafafa" stroke="#2a2a2c" stroke-width="0.8"/><path d="M858 239.7h10v7.6l-2.6 2.8h-7.4z" fill="#fafafa" stroke="#2a2a2c" stroke-width="0.8"/><rect x="864.4" y="246.4" width="4.6" height="3.8" fill="#e8e8e8" stroke="#4a4a4c" stroke-width="0.6"/><path d="M872 240.4h3.6l1 1.2h5.4v7.6h-10z" fill="#a2a2a4" stroke="#3a3a3c" stroke-width="0.7"/><rect x="879" y="244.4" width="5" height="6" rx="1" fill="#f6f6f6" stroke="#3a3a3c" stroke-width="0.7"/><path d="M892 240.2l3.6 3.4h-2.2v2.6h2.2l-3.6 3.4l-3.6-3.4h2.2v-2.6h-2.2z" fill="#88898b" stroke="#6a6b6d" stroke-width="0.6"/><path d="M905.6 239.6c1.8 0 2.8 1.2 2.8 2.8c0 0.8 0.6 1.4 1.8 1.8l1 2.6l-2.4-0.4l0.6 3.8h-7.6l0.6-3.8l-2.4 0.4l1-2.6c1.2-0.4 1.8-1 1.8-1.8c0-1.6 1-2.8 2.8-2.8z" fill="#f0f0f0" stroke="#141416" stroke-width="0.9"/><path d="M903.4 246.4h4.4v3h-4.4z" fill="#141416"/><rect x="914.4" y="241" width="11.6" height="8" fill="#f4f4f4" stroke="#1e1e20" stroke-width="0.8"/><rect x="915.4" y="242" width="9.6" height="6" fill="#2a2a2c"/><circle cx="920.4" cy="245" r="2.2" fill="#f4f4f4"/><path d="M930 240.6v9.6M930 241h5l3 2.4l-3 2.2h-5" fill="#8c8d8f" stroke="#6a6b6d" stroke-width="0.9"/><path d="M932 247.4l4.2 2.6" stroke="#6a6b6d" stroke-width="0.9"/><path d="M943.6 243h8l-0.9 7.4h-6.2z" fill="#ececec" stroke="#1e1e20" stroke-width="0.8"/><ellipse cx="947.6" cy="242.6" rx="4.6" ry="1.8" fill="#dcdcdc" stroke="#1e1e20" stroke-width="0.8"/><path d="M945.6 241c0.6-1.2 3.4-1.2 4 0" fill="none" stroke="#1e1e20" stroke-width="0.8"/><path d="M945 246.2h5.2" stroke="#8a8a8c" stroke-width="0.7"/></svg>
<div class="a" style="left:837.5px;top:254.6px;width:109px;height:256.4px;background:#7a7b7d;border-left:1.2px solid #545456;border-top:0.8px solid #545456;"></div>
<div class="a" style="left:946.2px;top:254.6px;width:9px;height:256.4px;background:#737476;"></div>
<div class="a" style="left:955px;top:206px;width:1.8px;height:305px;background:#5a5a5c;"></div>
<div class="a" style="left:956.8px;top:206px;width:3.2px;height:305px;background:#7c7d7f;"></div>
<div class="a" style="left:852.2px;top:255.4px;width:0.9px;height:56px;background:#555557;"></div>
<div class="a" style="left:865.4px;top:255.4px;width:0.9px;height:56px;background:#555557;"></div>
<div class="a" style="left:838.6px;top:282px;width:107.6px;height:0.9px;background:#555557;"></div>
<div class="a" style="left:838.6px;top:311px;width:107.6px;height:0.9px;background:#555557;"></div>
<div class="a" style="left:866.3px;top:255.4px;width:79.9px;height:26.6px;background:linear-gradient(#7b98ac,#6d8ba0);"></div>
<div class="a" style="left:868.8px;top:256px;width:21px;height:25.2px;background:#707173;border:1px solid #2c3a46;"></div>
<div class="a" style="left:873.2px;top:257.2px;width:12.4px;height:22.8px;background:#fff;background:conic-gradient(#cbcbcb 25%,#fff 0 50%,#cbcbcb 0 75%,#fff 0) 0px 0px/6.2px 6.2px;"></div>
<div class="a" style="left:878.2px;top:261.6px;width:1.6px;height:1.6px;background:#3a3a3c;border-radius:50%;"></div>
<div class="t" style="left:890.8px;top:257.5px;font-size:9px;line-height:11px;color:#e6eef4;transform:scaleX(0.7717);transform-origin:0 0;">100 % Normal</div>
<div class="t" style="left:890.8px;top:271.2px;font-size:9px;line-height:11px;color:#e6eef4;transform:scaleX(0.7662);transform-origin:0 0;">Layer 1</div>
<div class="a" style="left:870.4px;top:285.4px;width:18px;height:23.8px;background:#fff;border:0.8px solid #3a3a3c;border-radius:1px;"></div>
<div class="a" style="left:893px;top:285.2px;width:14px;height:13px;background:#f2f2f2;border:0.9px solid #2a2a2c;border-radius:1.5px;"></div>
<svg class="a" style="left:895.5px;top:287px;" width="9" height="10" viewBox="0 0 9 10"><path d="M0.8 0.6h4.8l2.6 2.6v6h-7.4z" fill="#fff" stroke="#2a2a2c" stroke-width="0.9"/><path d="M5.6 0.6v2.6h2.6" fill="none" stroke="#2a2a2c" stroke-width="0.8"/></svg>
<div class="t" style="left:890.8px;top:299.9px;font-size:9px;line-height:11px;color:#ececec;transform:scaleX(0.7912);transform-origin:0 0;">Paper</div>
<svg class="a" style="left:840.5px;top:265.1px;" width="9" height="7" viewBox="0 0 9 7"><path d="M0.4 3.5C2 1 7 1 8.6 3.5C7 6 2 6 0.4 3.5z" fill="#f2f2f2" stroke="#1e1e20" stroke-width="0.7"/><circle cx="4.5" cy="3.5" r="1.9" fill="#0c0c0e"/></svg>
<svg class="a" style="left:840.5px;top:293.5px;" width="9" height="7" viewBox="0 0 9 7"><path d="M0.4 3.5C2 1 7 1 8.6 3.5C7 6 2 6 0.4 3.5z" fill="#f2f2f2" stroke="#1e1e20" stroke-width="0.7"/><circle cx="4.5" cy="3.5" r="1.9" fill="#0c0c0e"/></svg>
<svg class="a" style="left:854px;top:263px;" width="11" height="11" viewBox="0 0 11 11"><path d="M1 9.6c3.6-0.6 7-3.4 8.6-7.4" fill="none" stroke="#1a1a1c" stroke-width="1.3"/><path d="M2 9c3-1 5.4-3 6.6-5.4" fill="none" stroke="#e8e8e8" stroke-width="0.6"/><path d="M8.4 3.4l1.8-2.4l0.2 2.8z" fill="#1a1a1c"/></svg>
<!-- p_wheel -->
<div class="a" style="left:632.3px;top:0px;width:123.8px;height:121.8px;background:#4c4c4e;box-shadow:0 0 1.5px #2a2a2c;"></div>
<div class="a" style="left:633.5px;top:0.5px;width:121.4px;height:12.2px;background:linear-gradient(#3c3c3c 0,#3e3e3e 6%,#58585a 12%,#4c4c4e 55%,#434345 100%);"></div>
<div class="a" style="left:635px;top:12.6px;width:117.4px;height:104.7px;background:#7a7b7d;"></div>
<svg class="a" style="left:637.5px;top:3px;" width="6" height="7" viewBox="0 0 6 7"><path d="M0.4 0.8l2 2.4l-2 2.4z" fill="#77787a"/><path d="M2.8 1.2h2.8M2.8 3.2h2.8M2.8 5.2h2.8" stroke="#77787a" stroke-width="0.8"/></svg>
<div class="t" style="left:675.9px;top:1.7px;font-size:8px;line-height:10px;color:#cdcdcd;transform:scaleX(0.7975);transform-origin:0 0;">Color Wheel</div>
<div class="a" style="left:731.5px;top:1.8px;width:9.4px;height:9.2px;background:#161618;border-radius:4.6px;"></div>
<div class="a" style="left:742px;top:1.8px;width:9.4px;height:9.2px;background:#161618;border-radius:4.6px;"></div>
<svg class="a" style="left:731.5px;top:1.8px;" width="20" height="9.2" viewBox="0 0 20 9.2"><path d="M2.2 6.4h5.2" stroke="#e8e8e8" stroke-width="1.5"/><path d="M2.2 4h5.2" stroke="#9a9a9a" stroke-width="0.9"/><path d="M13.2 2.6l4 4M17.2 2.6l-4 4" stroke="#f2f2f2" stroke-width="1.6"/></svg>
<div class="a" style="left:651.3px;top:17.2px;width:85.8px;height:85.8px;background:conic-gradient(from -5deg,#ffff00 0deg 10deg,#d4ff00 10deg 20deg,#aaff00 20deg 30deg,#7fff00 30deg 40deg,#54ff00 40deg 50deg,#2aff00 50deg 60deg,#00ff00 60deg 70deg,#00ff2a 70deg 80deg,#00ff55 80deg 90deg,#00ff7f 90deg 100deg,#00ffa9 100deg 110deg,#00ffd4 110deg 120deg,#00ffff 120deg 130deg,#00d4ff 130deg 140deg,#00a9ff 140deg 150deg,#007fff 150deg 160deg,#0054ff 160deg 170deg,#002aff 170deg 180deg,#0000ff 180deg 190deg,#2a00ff 190deg 200deg,#5400ff 200deg 210deg,#7f00ff 210deg 220deg,#aa00ff 220deg 230deg,#d400ff 230deg 240deg,#ff00ff 240deg 250deg,#ff00d4 250deg 260deg,#ff00aa 260deg 270deg,#ff007f 270deg 280deg,#ff0055 280deg 290deg,#ff002a 290deg 300deg,#ff0000 300deg 310deg,#ff2a00 310deg 320deg,#ff5400 320deg 330deg,#ff7f00 330deg 340deg,#ffaa00 340deg 350deg,#ffd400 350deg 360deg);border-radius:50%;-webkit-mask:radial-gradient(circle,transparent 32.9px,#000 33.7px);mask:radial-gradient(circle,transparent 32.9px,#000 33.7px);"></div>
<svg class="a" style="left:650.3px;top:16.2px;" width="87.8" height="87.8" viewBox="0 0 87.8 87.8"><circle cx="43.9" cy="43.9" r="42.9" fill="none" stroke="#4a4a4c" stroke-width="0.5"/><circle cx="43.9" cy="43.9" r="33.3" fill="none" stroke="#4a4a4c" stroke-width="0.5"/></svg>
<div class="a" style="left:672.3px;top:38.3px;width:44.2px;height:44.2px;background:#f00;background-image:linear-gradient(to top,#000,rgba(0,0,0,0)),linear-gradient(to right,#fff,rgba(255,255,255,0));border:0.5px solid #444;"></div>
<svg class="a" style="left:652px;top:30px;" width="16" height="16" viewBox="0 0 16 16"><rect x="-1.6" y="-5" width="3.2" height="10" transform="translate(7.6 9.2) rotate(-58)" fill="none" stroke="#1c1c1e" stroke-width="0.8"/></svg>
<div class="a" style="left:673px;top:80.3px;width:3.6px;height:3.6px;background:#1c1c1e;border:1px solid #f0f0f0;"></div>
<div class="a" style="left:643.7px;top:97px;width:11.6px;height:11px;background:#000;"></div>
<div class="a" style="left:635.6px;top:89px;width:12.4px;height:12.2px;background:#000;border:1.2px solid #6cbcec;box-shadow:inset 0 0 0 1px #c8c8c8;"></div>
<div class="a" style="left:636px;top:109.9px;width:19.3px;height:5.4px;background:#fff;background:conic-gradient(#8a8a8c 25%,#fff 0 50%,#8a8a8c 0 75%,#fff 0) 0px 0px/5.4px 5.4px;"></div>
<div class="a" style="left:666px;top:108.4px;width:5.2px;height:5.4px;background:#8a0a0a;border:0.5px solid #58585a;"></div>
<div class="a" style="left:688.2px;top:108.4px;width:5.2px;height:5.4px;background:#0a8a0a;border:0.5px solid #58585a;"></div>
<div class="a" style="left:710.6px;top:108.4px;width:5.2px;height:5.4px;background:#0a0ab4;border:0.5px solid #58585a;"></div>
<div class="t" style="left:679.9px;top:105.9px;font-size:9.4px;line-height:11px;color:#e2e2e2;transform:scaleX(0.7652);transform-origin:0 0;">0</div>
<div class="t" style="left:702px;top:105.9px;font-size:9.4px;line-height:11px;color:#e2e2e2;transform:scaleX(0.7652);transform-origin:0 0;">0</div>
<div class="t" style="left:724.5px;top:105.9px;font-size:9.4px;line-height:11px;color:#e2e2e2;transform:scaleX(0.7652);transform-origin:0 0;">0</div>
<div class="a" style="left:738px;top:103.9px;width:10.6px;height:10.6px;background:conic-gradient(from 0deg,#ffe000,#40d000,#00b0d0,#2040e0,#a020c0,#e02020,#ff8000,#ffe000);border-radius:50%;-webkit-mask:radial-gradient(circle,transparent 3px,#000 3.5px);mask:radial-gradient(circle,transparent 3px,#000 3.5px);"></div>
<svg class="a" style="left:738px;top:103.9px;" width="10.6" height="10.6" viewBox="0 0 10.6 10.6"><circle cx="5.3" cy="5.3" r="3.1" fill="#77787a"/><path d="M4 3.4l3.4 1.9l-3.4 1.9z" fill="#b01818"/></svg>
<!-- p_task -->
<svg class="a" style="left:156.5px;top:503px;" width="37.2" height="8" viewBox="0 0 37.2 8"><rect width="37.2" height="8" fill="#77787a"/><path d="M12 8L37.2 1.4V8z" fill="#3e3e40"/></svg>
<div class="a" style="left:193.7px;top:503px;width:2.6px;height:8px;background:#58585a;"></div>
<div class="t" style="left:157.3px;top:502.2px;font-size:10px;line-height:12px;color:#e4e4e4;transform:scaleX(0.7194);transform-origin:0 0;font-style:italic;">77.2</div>
<svg class="a" style="left:196.4px;top:503px;" width="30" height="8" viewBox="0 0 30 8"><rect width="30" height="8" fill="#77787a"/><path d="M0 8L30 0.6V8z" fill="#3e3e40"/></svg>
<svg class="a" style="left:228px;top:502.5px;" width="40" height="8.5" viewBox="228 502.5 40 8.5"><circle cx="233.5" cy="506.4" r="2.9" fill="#f0f0f0" stroke="#2a2a2c" stroke-width="0.9"/><path d="M235.5 508.6l2 2" stroke="#1e1e20" stroke-width="1.4"/><path d="M232 506.4h3" stroke="#2a2a2c" stroke-width="0.9"/><circle cx="247.6" cy="506.4" r="2.9" fill="#f0f0f0" stroke="#2a2a2c" stroke-width="0.9"/><path d="M249.6 508.6l2 2" stroke="#1e1e20" stroke-width="1.4"/><path d="M246.1 506.4h3" stroke="#2a2a2c" stroke-width="0.9"/><path d="M247.6 504.9v3" stroke="#2a2a2c" stroke-width="0.9"/><rect x="258.3" y="503" width="7.8" height="7.8" fill="#0c0c0e"/><rect x="260.2" y="504.8" width="4" height="4" fill="none" stroke="#5a5a5c" stroke-width="0.7"/></svg>
<div class="a" style="left:271px;top:503px;width:32.5px;height:8px;background:#77787a;"></div>
<div class="t" style="left:272.5px;top:502.2px;font-size:10px;line-height:12px;color:#e4e4e4;transform:scaleX(0.7194);transform-origin:0 0;font-style:italic;">0.0</div>
<svg class="a" style="left:306px;top:503px;" width="32" height="7.8" viewBox="0 0 32 7.8"><rect width="32" height="7.8" fill="#77787a"/><path d="M0 7.8C5 7.8 8 0.4 13 0.3H30.5L32 7.8z" fill="#3e3e40"/></svg>
<svg class="a" style="left:340px;top:502.5px;" width="40" height="8.5" viewBox="340 502.5 40 8.5"><path d="M343.6 510c-0.6-3.4 1.2-5.4 3.2-5.4c2 0 3.2 1.8 3 4.6" fill="none" stroke="#141416" stroke-width="1.5"/><path d="M341.2 508h4.8l-2.2 3z" fill="#141416"/><path d="M362.4 510c0.6-3.4-1.2-5.4-3.2-5.4c-2 0-3.2 1.8-3 4.6" fill="none" stroke="#141416" stroke-width="1.5"/><path d="M364.8 508h-4.8l2.2 3z" fill="#141416"/><circle cx="374" cy="507" r="3.3" fill="none" stroke="#58585a" stroke-width="1.2" stroke-dasharray="1.3 1.3"/></svg>
<div class="a" style="left:382px;top:503.2px;width:7px;height:7.4px;background:#858688;border-radius:1px;"></div>
<svg class="a" style="left:383.5px;top:504.5px;" width="4" height="5" viewBox="0 0 4 5"><path d="M3.2 0.4v4.2l-2.6-2.1z" fill="#4a4a4c"/></svg>
<div class="a" style="left:780px;top:503.2px;width:7px;height:7.4px;background:#858688;border-radius:1px;"></div>
<svg class="a" style="left:781.8px;top:504.5px;" width="4" height="5" viewBox="0 0 4 5"><path d="M0.8 0.4v4.2l2.6-2.1z" fill="#4a4a4c"/></svg>
<div class="a" style="left:504px;top:503.2px;width:163.5px;height:7.4px;background:linear-gradient(#8a8b8d,#7e7f81);border-radius:1px;"></div>
<svg class="a" style="left:583px;top:504.5px;" width="6" height="5" viewBox="0 0 6 5"><path d="M0.5 0v5M2.5 0v5M4.5 0v5" stroke="#5e5e60" stroke-width="0.7"/></svg>
<div class="a" style="left:787.5px;top:502.2px;width:9px;height:8.8px;background:#747577;"></div>
<div class="t" style="left:754.2px;top:456.6px;font-size:14.6px;line-height:18px;color:rgba(255,255,255,0.32);transform:scaleX(0.9547);transform-origin:0 0;">Activate Windows</div>
<div class="t" style="left:754.2px;top:475.3px;font-size:10.8px;line-height:13px;color:rgba(255,255,255,0.32);transform:scaleX(0.9726);transform-origin:0 0;">Go to Settings to activate Windows.</div>
<div class="a" style="left:0px;top:511px;width:960px;height:29px;background:#0c0e17;"></div>
<svg class="a" style="left:275px;top:511px" width="685" height="29"><filter id="tx" color-interpolation-filters="sRGB" x="0" y="0" width="100%" height="100%"><feTurbulence type="fractalNoise" baseFrequency="0.07 0.09" numOctaves="3" seed="7"/><feColorMatrix type="matrix" values="0 0 0 0 0.030  0 0 0 0 0.036  0 0 0 0 0.070  1.500 0.600 0 0 -0.620"/></filter><rect width="685" height="29" fill="#0e1019"/><rect width="685" height="29" filter="url(#tx)"/><rect width="685" height="29" fill="none"/></svg>
<svg class="a" style="left:275px;top:511px" width="685" height="29"><filter id="tx2" color-interpolation-filters="sRGB" x="0" y="0" width="100%" height="100%"><feTurbulence type="fractalNoise" baseFrequency="0.05 0.07" numOctaves="2" seed="3"/><feColorMatrix type="matrix" values="0 0 0 0 0.110  0 0 0 0 0.125  0 0 0 0 0.200  0 2.400 0 0 -0.950"/></filter><rect width="685" height="29" filter="url(#tx2)"/></svg>
<div class="a" style="left:0px;top:510.6px;width:960px;height:1.1px;background:#c2c2c4;"></div>
<div class="a" style="left:219px;top:510.5px;width:29px;height:1.2px;background:#c86428;"></div>
<div class="a" style="left:0px;top:511.6px;width:33.8px;height:28.4px;background:#020202;"></div>
<div class="a" style="left:33.8px;top:511.6px;width:241.5px;height:28.4px;background:#3a3a3a;"></div>
<svg class="a" style="left:10.8px;top:519.5px;" width="12.4" height="12.4" viewBox="0 0 12.4 12.4"><path d="M0 1.8l5-0.7v4.7h-5zM5.7 1l6.7-1v5.8h-6.7zM0 6.5h5v4.7l-5-0.7zM5.7 6.5h6.7v5.9l-6.7-1z" fill="#fff"/></svg>
<svg class="a" style="left:40.5px;top:518.8px;" width="14" height="14" viewBox="0 0 14 14"><circle cx="7" cy="7" r="5.5" fill="none" stroke="#f4f4f4" stroke-width="1.6"/></svg>
<div class="t" style="left:59.5px;top:520.1px;font-size:11px;line-height:13px;color:#b4b4b4;transform:scaleX(0.9285);transform-origin:0 0;">Ask me anything</div>
<svg class="a" style="left:257px;top:519.5px;" width="9" height="13" viewBox="0 0 9 13"><rect x="2.6" y="0.6" width="3.6" height="7" rx="1.8" fill="#8c8c8c"/><path d="M1 5.4c0 4.6 6.8 4.6 6.8 0M4.4 9v2.6M2.4 11.8h4" fill="none" stroke="#8c8c8c" stroke-width="0.9"/></svg>
<svg class="a" style="left:285px;top:520px;" width="15" height="12" viewBox="0 0 15 12"><rect x="3.4" y="1" width="8.2" height="9.6" fill="none" stroke="#f2f2f2" stroke-width="1"/><path d="M2 2.6h-1.4v6.4h1.4M13 2.6h1.4v6.4h-1.4" fill="none" stroke="#f2f2f2" stroke-width="0.9"/></svg>
<svg class="a" style="left:320px;top:516.5px;" width="16" height="17" viewBox="0 0 16 17"><path d="M5.2 5c0-4.4 5.6-4.4 5.6 0" fill="none" stroke="#f0f0f0" stroke-width="1"/><path d="M0.6 5h14.8l-0.8 11.4h-13.2z" fill="#fafafa"/><rect x="4.2" y="7" width="3.4" height="3.4" fill="#f03a1e"/><rect x="8.4" y="7" width="3.4" height="3.4" fill="#7cbc00"/><rect x="4.2" y="11.2" width="3.4" height="3.4" fill="#00a2ee"/><rect x="8.4" y="11.2" width="3.4" height="3.4" fill="#ffba00"/></svg>
<svg class="a" style="left:352px;top:516px;" width="20" height="18" viewBox="0 0 20 18"><circle cx="8" cy="7.4" r="4.6" fill="none" stroke="#d6ecfa" stroke-width="2.6" stroke-dasharray="2.4 1.2"/><circle cx="8" cy="7.4" r="3.6" fill="none" stroke="#d6ecfa" stroke-width="1.6"/><circle cx="15.4" cy="13.6" r="2.4" fill="none" stroke="#d6ecfa" stroke-width="1.8" stroke-dasharray="1.4 0.8"/><circle cx="15.4" cy="13.6" r="1.8" fill="none" stroke="#d6ecfa" stroke-width="1"/></svg>
<svg class="a" style="left:389px;top:518.5px;" width="16.5" height="14.5" viewBox="0 0 16.5 14.5"><path d="M0.4 1.4c0-0.6 0.4-1 1-1h4.4l1.4 1.6h8.2c0.6 0 1 0.4 1 1v10.6h-16z" fill="#f6d473"/><path d="M0.4 4h16v9.8h-16z" fill="#fbe08a"/><path d="M3.6 8.4h9.2v5.4h-9.2z" fill="#3aa0e6"/><path d="M6 10.8h4.4v3h-4.4z" fill="#fbe08a"/></svg>
<svg class="a" style="left:423px;top:519.5px;" width="16.5" height="14.5" viewBox="0 0 16.5 14.5"><path d="M0.4 0.6h15.6l-7.8 13.4z" fill="#141006" stroke="#c8a040" stroke-width="1.2"/><path d="M4 2.8l4.2 7.6l4.2-7.6M8.2 3v8" fill="none" stroke="#c8a040" stroke-width="0.9"/><circle cx="8.2" cy="5.4" r="1.5" fill="none" stroke="#e0c060" stroke-width="0.7"/></svg>
<div class="a" style="left:457.8px;top:517.8px;width:16px;height:16px;background:conic-gradient(from -60deg,#e5392d 0 120deg,#f9c20c 120deg 240deg,#1fa352 240deg 360deg);border-radius:50%;"></div>
<div class="a" style="left:462px;top:522px;width:7.6px;height:7.6px;background:#4286f0;border-radius:50%;border:1.4px solid #f4f4f4;"></div>
<div class="a" style="left:483.3px;top:511.6px;width:33.8px;height:28.4px;background:rgba(150,154,166,0.30);"></div>
<div class="a" style="left:492.5px;top:518px;width:15.5px;height:15px;background:#f2f2f2;"></div>
<svg class="a" style="left:492.5px;top:518px;" width="15.5" height="15" viewBox="0 0 15.5 15"><path d="M9.2 6.6c-2.8-0.6-5.2 0-5.2-1.8c0-2 4-2.4 6.6-1.4c2.2 0.8 2.4 3 0.4 4.4c-1.6 1.1-3.2 1.6-3.2 3c0 1 1.2 1.4 1.8 1.2" fill="none" stroke="#111" stroke-width="1.7" stroke-linecap="round"/></svg>
<div class="a" style="left:417.5px;top:538.2px;width:28.3px;height:1.8px;background:#76b9ed;"></div>
<div class="a" style="left:451.7px;top:538.2px;width:28.3px;height:1.8px;background:#76b9ed;"></div>
<div class="a" style="left:483.3px;top:538.2px;width:33.7px;height:1.8px;background:#76b9ed;"></div>
<svg class="a" style="left:740px;top:515px;" width="215" height="22" viewBox="740 515 215 22"><path d="M744.6 527.6l3.9-3.9l3.9 3.9" fill="none" stroke="#f0f0f0" stroke-width="1.3"/><rect x="761.4" y="523.4" width="8.6" height="4.6" fill="none" stroke="#f0f0f0" stroke-width="0.9"/><rect x="762.6" y="524.6" width="5" height="2.2" fill="#f0f0f0"/><path d="M759 522.4v3.4h2M757.6 523v-1.6M760 523v-1.6" stroke="#f0f0f0" stroke-width="0.9" fill="none"/><path d="M778.6 530.6a8.2 8.2 0 0 1 8.2-8.2M781.2 530.6a5.600 5.600 0 0 1 5.600-5.600M783.800 530.600a3 3 0 0 1 3-3" fill="none" stroke="#d8d8d8" stroke-width="1"/><rect x="785.600" y="529.200" width="1.600" height="1.600" fill="#f0f0f0"/><path d="M793.6 524.6h1.8l2.6-2.4v8l-2.6-2.4h-1.8z" fill="none" stroke="#f0f0f0" stroke-width="0.9"/><path d="M799.6 524.2c1 1 1 3 0 4M801.4 522.8c1.8 1.8 1.8 5 0 6.8" fill="none" stroke="#f0f0f0" stroke-width="0.8"/><path d="M803.2 521.6c2.4 2.4 2.4 6.8 0 9.2" fill="none" stroke="#8a8a8a" stroke-width="0.8"/><path d="M813.200 530.800c1.800 1.600 4 0.200 4.600-2.400l1.400-5.600c0.600-2 3.200-2 3 0.200c-0.200 2.200-3.200 4.200-6.200 4c-2.200-0.200-2.600 1.800-0.800 2.400c2.200 0.600 6-0.600 8.200-2.600" fill="none" stroke="#f0f0f0" stroke-width="1.200"/><rect x="833.4" y="521.8" width="15.2" height="8.6" rx="0.8" fill="none" stroke="#f0f0f0" stroke-width="1"/><path d="M835.4 524h11.2M835.4 526h11.2M837.4 528.2h7.2" stroke="#f0f0f0" stroke-width="0.8" stroke-dasharray="1.2 0.8"/><path d="M930.6 520.6h12.4v8.6h-7.8l-2 2.4v-2.4h-2.6z" fill="none" stroke="#f0f0f0" stroke-width="1"/><path d="M932.8 523.2h8M932.8 525.2h8M932.8 527.2h4" stroke="#f0f0f0" stroke-width="0.7"/><circle cx="941.6" cy="530" r="2.3" fill="#1a1c24" stroke="#f0f0f0" stroke-width="0.8"/><path d="M940.8 530h1.6M941.6 529.2v1.6" stroke="#f0f0f0" stroke-width="0.6"/></svg>
<div class="t" style="left:856.9px;top:519.9px;font-size:9.6px;line-height:12px;color:#ffffff;transform:scaleX(0.7643);transform-origin:0 0;text-shadow:0 0 0.4px #fff;">ENG</div>
<div class="t" style="left:884.6px;top:514.2px;font-size:9.6px;line-height:12px;color:#ffffff;transform:scaleX(0.8631);transform-origin:0 0;text-shadow:0 0 0.4px #fff;">9:13 AM</div>
<div class="t" style="left:882.2px;top:526.3px;font-size:9.6px;line-height:12px;color:#ffffff;transform:scaleX(0.8571);transform-origin:0 0;text-shadow:0 0 0.4px #fff;">9/13/2018</div>
<div class="a" style="left:956.5px;top:511.8px;width:0.8px;height:28.2px;background:#7a7c84;"></div>
</body></html>
